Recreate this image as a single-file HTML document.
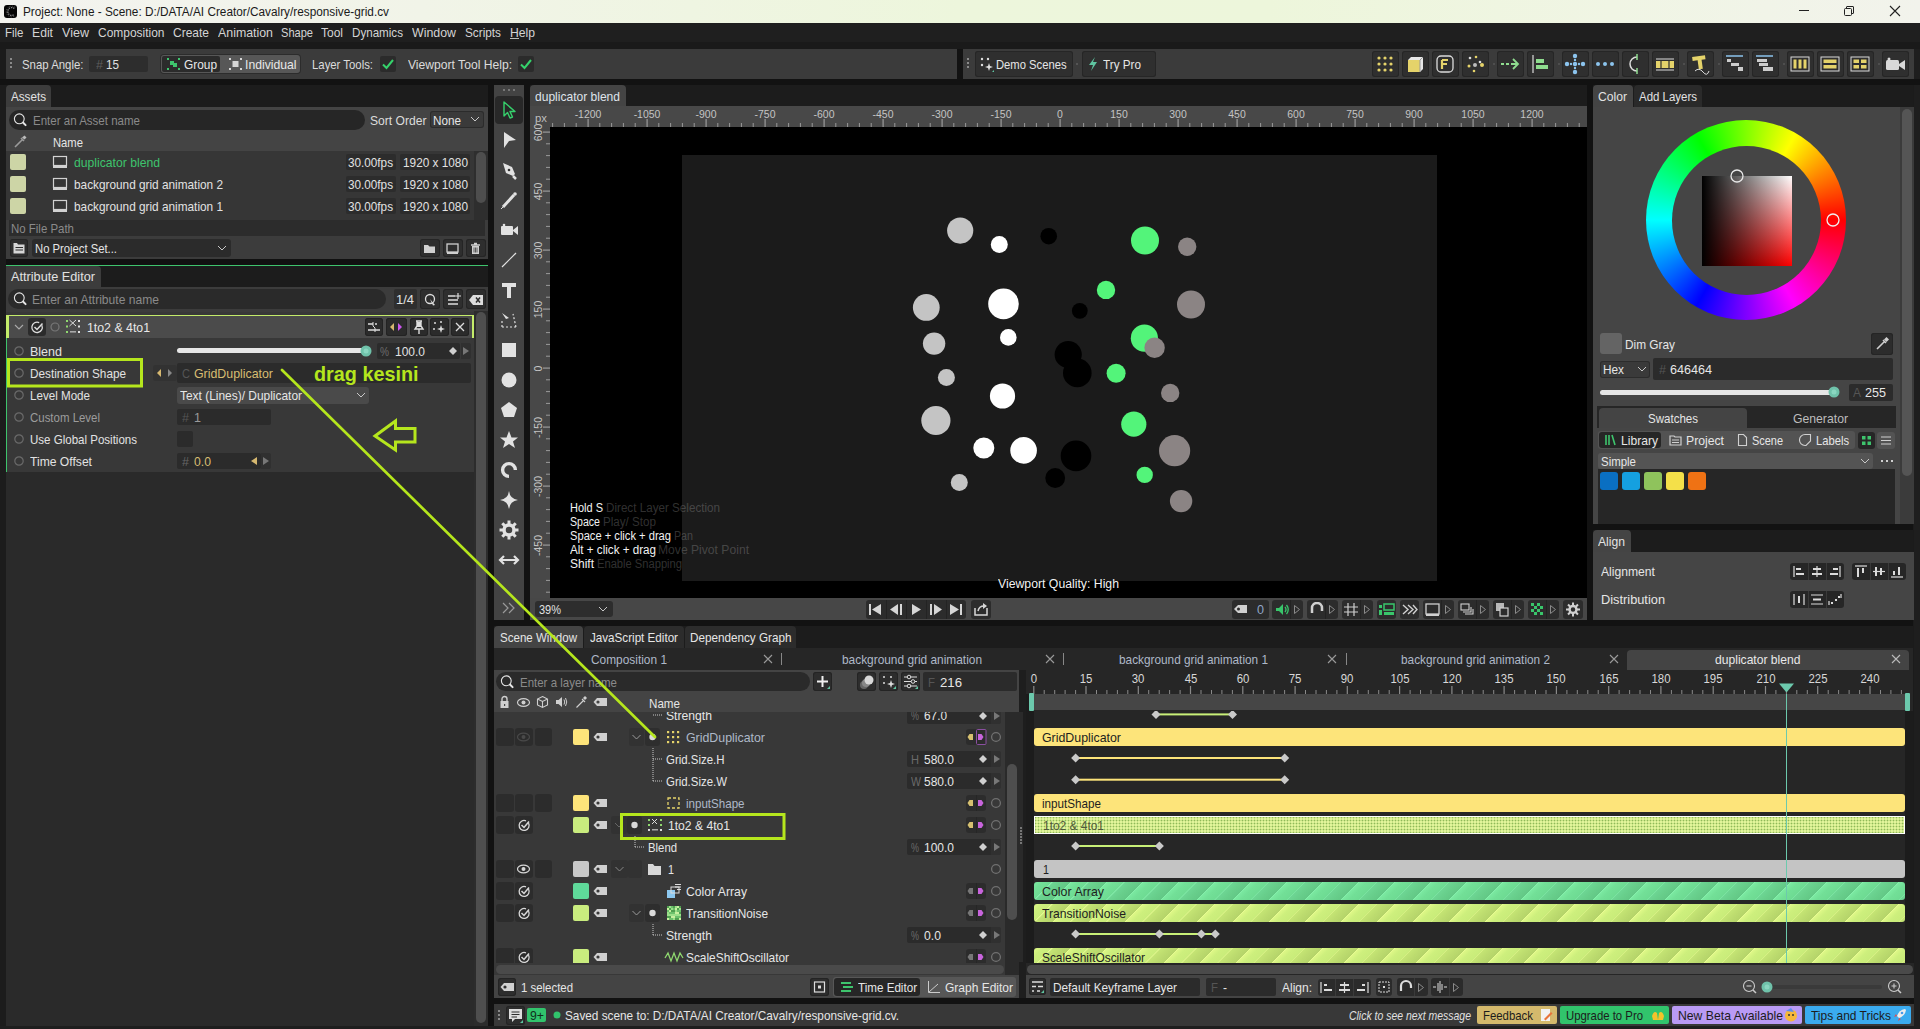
<!DOCTYPE html>
<html><head><meta charset="utf-8"><title>Cavalry</title>
<style>
html,body{margin:0;padding:0;}
body{width:1920px;height:1029px;overflow:hidden;position:relative;background:#1b1b1b;font-family:"Liberation Sans",sans-serif;}
body>div,body>svg{position:absolute;box-sizing:content-box;}
</style></head><body>
<div style="left:0px;top:0px;width:1920px;height:23px;background:linear-gradient(90deg,#f3f3ef 0%,#f1f4e8 22%,#edf6dc 50%,#edf6db 66%,#f0f5e4 84%,#f2f3ec 100%);"></div>
<div style="left:3.5px;top:4.5px;width:13px;height:13px;background:#050505;border-radius:3px;"></div>
<svg style="left:3.5px;top:4.5px;" width="13" height="13" viewBox="0 0 13 13"><path d="M10.3 3.6 A3.9 3.9 0 1 0 10.3 9.4" fill="none" stroke="#8a8a8a" stroke-width="1.3" stroke-dasharray="1.3 0.9"/><path d="M11.2 2.4 A5.4 5.4 0 1 0 11.2 10.6" fill="none" stroke="#555" stroke-width="0.9" stroke-dasharray="1.2 1.2"/></svg>
<div class="t" id="t0" style="left:23px;top:4.0px;height:16px;line-height:16px;font-size:12px;color:#1a1a1a;font-family:'Liberation Sans',sans-serif;white-space:nowrap;transform:scaleX(0.9829);transform-origin:0 50%;">Project: None - Scene: D:/DATA/AI Creator/Cavalry/responsive-grid.cv</div>
<div style="left:1799px;top:10px;width:10px;height:1px;background:#222;"></div>
<svg style="left:1843px;top:5px;" width="12" height="12" viewBox="0 0 12 12"><rect x="1.5" y="3.5" width="7" height="7" rx="1" fill="none" stroke="#222" stroke-width="1"/><path d="M3.5 3.5 V2 a0.5 .5 0 0 1 .5-.5 H10 a.5 .5 0 0 1 .5.5 V8 a.5 .5 0 0 1-.5.5 H8.5" fill="none" stroke="#222" stroke-width="1"/></svg>
<svg style="left:1889px;top:5px;" width="12" height="12" viewBox="0 0 12 12"><path d="M1 1 L11 11 M11 1 L1 11" stroke="#222" stroke-width="1.1"/></svg>
<div style="left:0px;top:23px;width:1920px;height:19px;background:#1f1f1f;"></div>
<div style="left:0px;top:42px;width:1920px;height:7px;background:#1a1a1a;"></div>
<div style="left:957px;top:49px;width:6px;height:30px;background:#121212;"></div>
<div class="t" id="t1" style="left:4.5px;top:24.0px;height:18px;line-height:18px;font-size:13px;color:#d4d4d4;font-family:'Liberation Sans',sans-serif;white-space:nowrap;transform:scaleX(0.8829);transform-origin:0 50%;">File</div>
<div class="t" id="t2" style="left:32px;top:24.0px;height:18px;line-height:18px;font-size:13px;color:#d4d4d4;font-family:'Liberation Sans',sans-serif;white-space:nowrap;transform:scaleX(0.9372);transform-origin:0 50%;">Edit</div>
<div class="t" id="t3" style="left:62px;top:24.0px;height:18px;line-height:18px;font-size:13px;color:#d4d4d4;font-family:'Liberation Sans',sans-serif;white-space:nowrap;transform:scaleX(0.9659);transform-origin:0 50%;">View</div>
<div class="t" id="t4" style="left:97.5px;top:24.0px;height:18px;line-height:18px;font-size:13px;color:#d4d4d4;font-family:'Liberation Sans',sans-serif;white-space:nowrap;transform:scaleX(0.9202);transform-origin:0 50%;">Composition</div>
<div class="t" id="t5" style="left:173px;top:24.0px;height:18px;line-height:18px;font-size:13px;color:#d4d4d4;font-family:'Liberation Sans',sans-serif;white-space:nowrap;transform:scaleX(0.9223);transform-origin:0 50%;">Create</div>
<div class="t" id="t6" style="left:218px;top:24.0px;height:18px;line-height:18px;font-size:13px;color:#d4d4d4;font-family:'Liberation Sans',sans-serif;white-space:nowrap;transform:scaleX(0.9514);transform-origin:0 50%;">Animation</div>
<div class="t" id="t7" style="left:281px;top:24.0px;height:18px;line-height:18px;font-size:13px;color:#d4d4d4;font-family:'Liberation Sans',sans-serif;white-space:nowrap;transform:scaleX(0.8512);transform-origin:0 50%;">Shape</div>
<div class="t" id="t8" style="left:321px;top:24.0px;height:18px;line-height:18px;font-size:13px;color:#d4d4d4;font-family:'Liberation Sans',sans-serif;white-space:nowrap;transform:scaleX(0.9221);transform-origin:0 50%;">Tool</div>
<div class="t" id="t9" style="left:352px;top:24.0px;height:18px;line-height:18px;font-size:13px;color:#d4d4d4;font-family:'Liberation Sans',sans-serif;white-space:nowrap;transform:scaleX(0.8935);transform-origin:0 50%;">Dynamics</div>
<div class="t" id="t10" style="left:412px;top:24.0px;height:18px;line-height:18px;font-size:13px;color:#d4d4d4;font-family:'Liberation Sans',sans-serif;white-space:nowrap;transform:scaleX(0.9514);transform-origin:0 50%;">Window</div>
<div class="t" id="t11" style="left:465px;top:24.0px;height:18px;line-height:18px;font-size:13px;color:#d4d4d4;font-family:'Liberation Sans',sans-serif;white-space:nowrap;transform:scaleX(0.9060);transform-origin:0 50%;">Scripts</div>
<div class="t" id="t12" style="left:510px;top:24.0px;height:18px;line-height:18px;font-size:13px;color:#d4d4d4;font-family:'Liberation Sans',sans-serif;white-space:nowrap;transform:scaleX(0.9346);transform-origin:0 50%;">Help</div>
<div style="left:510px;top:38px;width:9px;height:1px;background:#bbb;"></div>
<div style="left:6px;top:49px;width:951px;height:30px;background:#3b3b3b;"></div>
<div style="left:963px;top:49px;width:951px;height:30px;background:#3b3b3b;"></div>
<div style="left:1914px;top:49px;width:6px;height:30px;background:#1e1e1e;"></div>
<div style="left:10px;top:58px;width:2px;height:2px;background:#8a8a8a;"></div>
<div style="left:10px;top:62px;width:2px;height:2px;background:#8a8a8a;"></div>
<div style="left:10px;top:66px;width:2px;height:2px;background:#8a8a8a;"></div>
<div class="t" id="t13" style="left:22px;top:56.0px;height:18px;line-height:18px;font-size:13px;color:#dcdcdc;font-family:'Liberation Sans',sans-serif;white-space:nowrap;transform:scaleX(0.8770);transform-origin:0 50%;">Snap Angle:</div>
<div style="left:89px;top:56px;width:59px;height:16px;background:#2d2d2d;border-radius:2px;"></div>
<div class="t" id="t14" style="left:95.5px;top:57.0px;height:16px;line-height:16px;font-size:12px;color:#5e5e5e;font-family:'Liberation Sans',sans-serif;white-space:nowrap;transform:scaleX(1.0467);transform-origin:0 50%;">#</div>
<div class="t" id="t15" style="left:106px;top:56.0px;height:18px;line-height:18px;font-size:13px;color:#e0e0e0;font-family:'Liberation Sans',sans-serif;white-space:nowrap;transform:scaleX(0.8985);transform-origin:0 50%;">15</div>
<div style="left:161px;top:55px;width:139px;height:18px;background:#575757;border-radius:3px;box-shadow:0 0 0 1px #2c2c2c;"></div>
<div style="left:162px;top:56px;width:58px;height:16px;background:#2b2b2b;border-radius:2px;"></div>
<svg style="left:166px;top:57px;" width="15" height="14" viewBox="0 0 15 14"><g fill="#3ec46d"><rect x="1" y="1" width="2" height="2"/><rect x="12" y="1" width="2" height="2"/><rect x="1" y="11" width="2" height="2"/><rect x="12" y="11" width="2" height="2"/><rect x="4" y="4" width="4" height="4"/><rect x="7" y="6" width="4" height="4"/></g></svg>
<div class="t" id="t16" style="left:184px;top:56.0px;height:18px;line-height:18px;font-size:13px;color:#e8e8e8;font-family:'Liberation Sans',sans-serif;white-space:nowrap;transform:scaleX(0.9131);transform-origin:0 50%;">Group</div>
<svg style="left:228px;top:57px;" width="15" height="14" viewBox="0 0 15 14"><g fill="#d6d6d6"><rect x="1" y="1" width="2" height="2"/><rect x="12" y="1" width="2" height="2"/><rect x="1" y="11" width="2" height="2"/><rect x="12" y="11" width="2" height="2"/><rect x="4.5" y="4" width="6" height="6"/></g></svg>
<div class="t" id="t17" style="left:245px;top:56.0px;height:18px;line-height:18px;font-size:13px;color:#e8e8e8;font-family:'Liberation Sans',sans-serif;white-space:nowrap;transform:scaleX(0.9374);transform-origin:0 50%;">Individual</div>
<div class="t" id="t18" style="left:312px;top:56.0px;height:18px;line-height:18px;font-size:13px;color:#dcdcdc;font-family:'Liberation Sans',sans-serif;white-space:nowrap;transform:scaleX(0.8732);transform-origin:0 50%;">Layer Tools:</div>
<div style="left:380px;top:56px;width:16px;height:16px;background:#2b2b2b;border-radius:2px;"></div>
<svg style="left:380px;top:56px;" width="16" height="16" viewBox="0 0 16 16"><path d="M3 8.5 L6.5 12 L13 4" fill="none" stroke="#35d26b" stroke-width="2"/></svg>
<div class="t" id="t19" style="left:408px;top:56.0px;height:18px;line-height:18px;font-size:13px;color:#dcdcdc;font-family:'Liberation Sans',sans-serif;white-space:nowrap;transform:scaleX(0.9325);transform-origin:0 50%;">Viewport Tool Help:</div>
<div style="left:518px;top:56px;width:16px;height:16px;background:#2b2b2b;border-radius:2px;"></div>
<svg style="left:518px;top:56px;" width="16" height="16" viewBox="0 0 16 16"><path d="M3 8.5 L6.5 12 L13 4" fill="none" stroke="#35d26b" stroke-width="2"/></svg>
<div style="left:967px;top:58px;width:2px;height:2px;background:#8a8a8a;"></div>
<div style="left:967px;top:62px;width:2px;height:2px;background:#8a8a8a;"></div>
<div style="left:967px;top:66px;width:2px;height:2px;background:#8a8a8a;"></div>
<div style="left:975px;top:51px;width:98px;height:26px;background:#2f2f2f;border-radius:3px;box-shadow:inset 0 0 0 1px #262626;"></div>
<svg style="left:979px;top:56px;" width="16" height="16" viewBox="0 0 16 16"><g fill="#e0e0e0"><circle cx="3" cy="3" r="1.2"/><circle cx="9" cy="3" r="1.2"/><circle cx="3" cy="9" r="1.2"/><path d="M10 7 L11 10 L14 11 L11 12 L10 15 L9 12 L6 11 L9 10 Z"/></g><path d="M15 14 L15 16 L13 16 Z" fill="#5ec4a0"/></svg>
<div class="t" id="t20" style="left:996px;top:56.0px;height:18px;line-height:18px;font-size:13px;color:#e6e6e6;font-family:'Liberation Sans',sans-serif;white-space:nowrap;transform:scaleX(0.8634);transform-origin:0 50%;">Demo Scenes</div>
<div style="left:1076px;top:63px;width:2px;height:2px;background:#555;"></div>
<div style="left:1082px;top:51px;width:74px;height:26px;background:#2f2f2f;border-radius:3px;box-shadow:inset 0 0 0 1px #262626;"></div>
<svg style="left:1087px;top:56px;" width="12" height="16" viewBox="0 0 12 16"><path d="M8 1 L2 9 L6 9 L4 15 L10 6 L6 6 Z" fill="#5ec4a0"/></svg>
<div class="t" id="t21" style="left:1103px;top:56.0px;height:18px;line-height:18px;font-size:13px;color:#e6e6e6;font-family:'Liberation Sans',sans-serif;white-space:nowrap;transform:scaleX(0.9017);transform-origin:0 50%;">Try Pro</div>
<div style="left:1372px;top:51px;width:27px;height:26px;background:#2f2f2f;border-radius:3px;box-shadow:inset 0 0 0 1px #262626;"></div>
<svg style="left:1372px;top:51px;" width="26" height="26" viewBox="0 0 26 26"><circle cx="7" cy="7" r="1.6" fill="#e5d36a"/><circle cx="7" cy="13" r="1.6" fill="#e5d36a"/><circle cx="7" cy="19" r="1.6" fill="#e5d36a"/><circle cx="13" cy="7" r="1.6" fill="#e5d36a"/><circle cx="13" cy="13" r="1.6" fill="#e5d36a"/><circle cx="13" cy="19" r="1.6" fill="#e5d36a"/><circle cx="19" cy="7" r="1.6" fill="#e5d36a"/><circle cx="19" cy="13" r="1.6" fill="#e5d36a"/><circle cx="19" cy="19" r="1.6" fill="#e5d36a"/></svg>
<div style="left:1402px;top:51px;width:27px;height:26px;background:#2f2f2f;border-radius:3px;box-shadow:inset 0 0 0 1px #262626;"></div>
<svg style="left:1402px;top:51px;" width="26" height="26" viewBox="0 0 26 26"><path d="M6 9 L9 6 L21 6 L21 18 L18 21 Z" fill="#e8e8e8"/><rect x="6" y="9" width="12" height="12" fill="#e5d36a"/><path d="M18 9 L21 6 M18 9 V21" stroke="#999" stroke-width="1"/></svg>
<div style="left:1432px;top:51px;width:27px;height:26px;background:#2f2f2f;border-radius:3px;box-shadow:inset 0 0 0 1px #262626;"></div>
<svg style="left:1432px;top:51px;" width="26" height="26" viewBox="0 0 26 26"><rect x="5" y="5" width="16" height="16" rx="4" fill="none" stroke="#dcdcdc" stroke-width="1.3"/><path d="M10 9 H16 M10 9 V18 M10 13 H15" stroke="#e5d36a" stroke-width="2.2"/></svg>
<div style="left:1462px;top:51px;width:27px;height:26px;background:#2f2f2f;border-radius:3px;box-shadow:inset 0 0 0 1px #262626;"></div>
<svg style="left:1462px;top:51px;" width="26" height="26" viewBox="0 0 26 26"><circle cx="8" cy="7" r="1.3" fill="#dcdcdc"/><circle cx="14" cy="6" r="1.3" fill="#e5d36a"/><circle cx="18" cy="11" r="1.3" fill="#dcdcdc"/><circle cx="7" cy="15" r="1.5" fill="#e5d36a"/><circle cx="13" cy="14" r="2" fill="#bbb"/><circle cx="20" cy="14" r="2" fill="#e5d36a"/><circle cx="12" cy="20" r="1.3" fill="#e5d36a"/></svg>
<div style="left:1497px;top:51px;width:27px;height:26px;background:#2f2f2f;border-radius:3px;box-shadow:inset 0 0 0 1px #262626;"></div>
<svg style="left:1497px;top:51px;" width="26" height="26" viewBox="0 0 26 26"><path d="M4 13 H7 M9 13 H12 M14 13 H21 M16 8 L21 13 L16 18" fill="none" stroke="#8fdc8f" stroke-width="1.8"/></svg>
<div style="left:1527px;top:51px;width:27px;height:26px;background:#2f2f2f;border-radius:3px;box-shadow:inset 0 0 0 1px #262626;"></div>
<svg style="left:1527px;top:51px;" width="26" height="26" viewBox="0 0 26 26"><path d="M6 4 V22" stroke="#dcdcdc" stroke-width="1.2"/><rect x="9" y="8" width="8" height="4" fill="#8fdc8f"/><rect x="9" y="14" width="12" height="4" fill="#8fdc8f"/></svg>
<div style="left:1562px;top:51px;width:27px;height:26px;background:#2f2f2f;border-radius:3px;box-shadow:inset 0 0 0 1px #262626;"></div>
<svg style="left:1562px;top:51px;" width="26" height="26" viewBox="0 0 26 26"><circle cx="13" cy="5" r="2.2" fill="#8cc4ee"/><circle cx="13" cy="13" r="2.2" fill="#8cc4ee"/><circle cx="13" cy="21" r="2.2" fill="#8cc4ee"/><circle cx="5" cy="13" r="2.2" fill="#8cc4ee"/><circle cx="21" cy="13" r="2.2" fill="#8cc4ee"/><circle cx="9" cy="13" r="1.2" fill="#8cc4ee"/><circle cx="17" cy="13" r="1.2" fill="#8cc4ee"/><circle cx="13" cy="9" r="1.2" fill="#8cc4ee"/><circle cx="13" cy="17" r="1.2" fill="#8cc4ee"/></svg>
<div style="left:1592px;top:51px;width:27px;height:26px;background:#2f2f2f;border-radius:3px;box-shadow:inset 0 0 0 1px #262626;"></div>
<svg style="left:1592px;top:51px;" width="26" height="26" viewBox="0 0 26 26"><circle cx="6" cy="13" r="2" fill="#8cc4ee"/><circle cx="13" cy="13" r="2" fill="#8cc4ee"/><circle cx="20" cy="13" r="2" fill="#8cc4ee"/></svg>
<div style="left:1622px;top:51px;width:27px;height:26px;background:#2f2f2f;border-radius:3px;box-shadow:inset 0 0 0 1px #262626;"></div>
<svg style="left:1622px;top:51px;" width="26" height="26" viewBox="0 0 26 26"><path d="M15 6 A7 7 0 1 0 15 20" fill="none" stroke="#dcdcdc" stroke-width="1.5"/><path d="M15 3 V9 M15 17 V23" stroke="#8fdc8f" stroke-width="1.5"/></svg>
<div style="left:1652px;top:51px;width:27px;height:26px;background:#2f2f2f;border-radius:3px;box-shadow:inset 0 0 0 1px #262626;"></div>
<svg style="left:1652px;top:51px;" width="26" height="26" viewBox="0 0 26 26"><rect x="4" y="10" width="18" height="7" fill="#e5d36a"/><path d="M4 8 H22 M4 19 H22" stroke="#dcdcdc" stroke-width="1"/><path d="M9 10 V17 M17 10 V17" stroke="#2f2f2f" stroke-width="1.2"/></svg>
<div style="left:1687px;top:51px;width:27px;height:26px;background:#2f2f2f;border-radius:3px;box-shadow:inset 0 0 0 1px #262626;"></div>
<svg style="left:1687px;top:51px;" width="26" height="26" viewBox="0 0 26 26"><path d="M6 5 H19 V9 H15 V18 H11 V9 H6 Z" fill="#e5d36a" transform="rotate(-8 13 12)"/><path d="M8 20 Q12 16 16 21 T22 20" fill="none" stroke="#dcdcdc" stroke-width="1"/></svg>
<div style="left:1722px;top:51px;width:27px;height:26px;background:#2f2f2f;border-radius:3px;box-shadow:inset 0 0 0 1px #262626;"></div>
<svg style="left:1722px;top:51px;" width="26" height="26" viewBox="0 0 26 26"><path d="M4 5 H21" stroke="#8cc4ee" stroke-width="1.5"/><rect x="5" y="8" width="4" height="3" fill="#ccc"/><rect x="9" y="12" width="8" height="3" fill="#ccc"/><rect x="16" y="16" width="5" height="4" fill="#ccc"/></svg>
<div style="left:1752px;top:51px;width:27px;height:26px;background:#2f2f2f;border-radius:3px;box-shadow:inset 0 0 0 1px #262626;"></div>
<svg style="left:1752px;top:51px;" width="26" height="26" viewBox="0 0 26 26"><path d="M4 5 H21" stroke="#8cc4ee" stroke-width="1.5"/><rect x="5" y="8" width="10" height="3" fill="#ccc"/><rect x="7" y="12" width="9" height="3" fill="#ccc"/><rect x="11" y="16" width="10" height="4" fill="#ccc"/></svg>
<div style="left:1787px;top:51px;width:27px;height:26px;background:#2f2f2f;border-radius:3px;box-shadow:inset 0 0 0 1px #262626;"></div>
<svg style="left:1787px;top:51px;" width="26" height="26" viewBox="0 0 26 26"><rect x="4" y="6" width="18" height="14" fill="none" stroke="#dcdcdc" stroke-width="1"/><rect x="6.5" y="8.5" width="3" height="9" fill="#e5d36a"/><rect x="11.5" y="8.5" width="3" height="9" fill="#e5d36a"/><rect x="16.5" y="8.5" width="3" height="9" fill="#e5d36a"/></svg>
<div style="left:1817px;top:51px;width:27px;height:26px;background:#2f2f2f;border-radius:3px;box-shadow:inset 0 0 0 1px #262626;"></div>
<svg style="left:1817px;top:51px;" width="26" height="26" viewBox="0 0 26 26"><rect x="4" y="6" width="18" height="14" fill="none" stroke="#dcdcdc" stroke-width="1"/><rect x="6.5" y="8.5" width="13" height="3.5" fill="#e5d36a"/><rect x="6.5" y="14" width="13" height="3.5" fill="#e5d36a"/></svg>
<div style="left:1847px;top:51px;width:27px;height:26px;background:#2f2f2f;border-radius:3px;box-shadow:inset 0 0 0 1px #262626;"></div>
<svg style="left:1847px;top:51px;" width="26" height="26" viewBox="0 0 26 26"><rect x="4" y="6" width="18" height="14" fill="none" stroke="#dcdcdc" stroke-width="1"/><rect x="6.5" y="8.5" width="5.5" height="3.5" fill="#e5d36a"/><rect x="14" y="8.5" width="5.5" height="3.5" fill="#e5d36a"/><rect x="6.5" y="14" width="5.5" height="3.5" fill="#e5d36a"/><rect x="14" y="14" width="5.5" height="3.5" fill="#e5d36a"/></svg>
<div style="left:1882px;top:51px;width:27px;height:26px;background:#2f2f2f;border-radius:3px;box-shadow:inset 0 0 0 1px #262626;"></div>
<svg style="left:1882px;top:51px;" width="26" height="26" viewBox="0 0 26 26"><rect x="4" y="9" width="13" height="10" rx="1.5" fill="#d8d8d8"/><path d="M17 13 L23 9 V19 L17 15 Z" fill="#d8d8d8"/><circle cx="7" cy="8" r="1.5" fill="#d8d8d8"/></svg>
<div style="left:1493px;top:63px;width:2px;height:2px;background:#4e4e4e;"></div>
<div style="left:1558px;top:63px;width:2px;height:2px;background:#4e4e4e;"></div>
<div style="left:1683px;top:63px;width:2px;height:2px;background:#4e4e4e;"></div>
<div style="left:1718px;top:63px;width:2px;height:2px;background:#4e4e4e;"></div>
<div style="left:1783px;top:63px;width:2px;height:2px;background:#4e4e4e;"></div>
<div style="left:1878px;top:63px;width:2px;height:2px;background:#4e4e4e;"></div>
<div style="left:0px;top:79px;width:1920px;height:6px;background:#121212;"></div>
<div style="left:0px;top:85px;width:6px;height:944px;background:#1c1c1c;"></div>
<div style="left:6px;top:85px;width:482px;height:22px;background:#1c1c1c;"></div>
<div style="left:6px;top:85px;width:45px;height:22px;background:#3c3c3c;border-radius:4px 4px 0 0;"></div>
<div class="t" id="t22" style="left:11px;top:88.0px;height:18px;line-height:18px;font-size:13px;color:#e2e2e2;font-family:'Liberation Sans',sans-serif;white-space:nowrap;transform:scaleX(0.8971);transform-origin:0 50%;">Assets</div>
<div style="left:6px;top:107px;width:482px;height:44px;background:#444444;"></div>
<div style="left:6px;top:151px;width:482px;height:69px;background:#363636;"></div>
<div style="left:9px;top:110px;width:356px;height:20px;background:#262626;border-radius:10px;"></div>
<svg style="left:13px;top:112px;" width="16" height="16" viewBox="0 0 16 16"><circle cx="6.3" cy="6.8" r="4.9" fill="none" stroke="#e6e6e6" stroke-width="1.1"/><path d="M10.2 10.7 L12.6 13.1" stroke="#e6e6e6" stroke-width="2" stroke-linecap="round"/></svg>
<div class="t" id="t23" style="left:33px;top:111.5px;height:18px;line-height:18px;font-size:13px;color:#8a8a8a;font-family:'Liberation Sans',sans-serif;white-space:nowrap;transform:scaleX(0.8866);transform-origin:0 50%;">Enter an Asset name</div>
<div class="t" id="t24" style="left:370px;top:111.5px;height:18px;line-height:18px;font-size:13px;color:#dcdcdc;font-family:'Liberation Sans',sans-serif;white-space:nowrap;transform:scaleX(0.9310);transform-origin:0 50%;">Sort Order</div>
<div style="left:430px;top:111px;width:54px;height:17px;background:#3a3a3a;border-radius:3px;box-shadow:inset 0 0 0 1px #2b2b2b;"></div>
<div class="t" id="t25" style="left:433px;top:111.5px;height:18px;line-height:18px;font-size:13px;color:#e6e6e6;font-family:'Liberation Sans',sans-serif;white-space:nowrap;transform:scaleX(0.9010);transform-origin:0 50%;">None</div>
<svg style="left:470px;top:114px;" width="10" height="10" viewBox="0 0 10 10"><path d="M1 3 L5 7 L9 3" fill="none" stroke="#c8c8c8" stroke-width="1"/></svg>
<svg style="left:13px;top:135px;" width="14" height="14" viewBox="0 0 14 14"><path d="M2 12 L9 5 M8 3 L11 6" stroke="#9a9a9a" stroke-width="1.6"/><path d="M9 2.5 L11.5 0.5 L13.5 2.5 L11.5 4.5 Z" fill="#bbb"/></svg>
<div class="t" id="t26" style="left:53px;top:134.0px;height:18px;line-height:18px;font-size:13px;color:#e6e6e6;font-family:'Liberation Sans',sans-serif;white-space:nowrap;transform:scaleX(0.8649);transform-origin:0 50%;">Name</div>
<div style="left:10px;top:154px;width:16px;height:16px;background:#cdd5a6;border-radius:2px;"></div>
<svg style="left:52px;top:155px;" width="16" height="14" viewBox="0 0 16 14"><rect x="1.5" y="1.5" width="13" height="9" fill="none" stroke="#d2d2d2" stroke-width="1.2"/><rect x="1" y="10" width="14" height="3" fill="#d2d2d2"/></svg>
<div class="t" id="t27" style="left:74px;top:153.5px;height:18px;line-height:18px;font-size:13px;color:#3ec46d;font-family:'Liberation Sans',sans-serif;white-space:nowrap;transform:scaleX(0.9369);transform-origin:0 50%;">duplicator blend</div>
<div style="left:346px;top:154px;width:50px;height:16px;background:#2c2c2c;border-radius:2px;"></div>
<div class="t" id="t28" style="left:348px;top:153.5px;height:18px;line-height:18px;font-size:13px;color:#e2e2e2;font-family:'Liberation Sans',sans-serif;white-space:nowrap;transform:scaleX(0.9023);transform-origin:0 50%;">30.00fps</div>
<div style="left:400px;top:154px;width:70px;height:16px;background:#2c2c2c;border-radius:2px;"></div>
<div class="t" id="t29" style="left:403px;top:153.5px;height:18px;line-height:18px;font-size:13px;color:#e2e2e2;font-family:'Liberation Sans',sans-serif;white-space:nowrap;transform:scaleX(0.9081);transform-origin:0 50%;">1920 x 1080</div>
<div style="left:10px;top:176px;width:16px;height:16px;background:#cdd5a6;border-radius:2px;"></div>
<svg style="left:52px;top:177px;" width="16" height="14" viewBox="0 0 16 14"><rect x="1.5" y="1.5" width="13" height="9" fill="none" stroke="#d2d2d2" stroke-width="1.2"/><rect x="1" y="10" width="14" height="3" fill="#d2d2d2"/></svg>
<div class="t" id="t30" style="left:74px;top:175.5px;height:18px;line-height:18px;font-size:13px;color:#e2e2e2;font-family:'Liberation Sans',sans-serif;white-space:nowrap;transform:scaleX(0.9082);transform-origin:0 50%;">background grid animation 2</div>
<div style="left:346px;top:176px;width:50px;height:16px;background:#2c2c2c;border-radius:2px;"></div>
<div class="t" id="t31" style="left:348px;top:175.5px;height:18px;line-height:18px;font-size:13px;color:#e2e2e2;font-family:'Liberation Sans',sans-serif;white-space:nowrap;transform:scaleX(0.9023);transform-origin:0 50%;">30.00fps</div>
<div style="left:400px;top:176px;width:70px;height:16px;background:#2c2c2c;border-radius:2px;"></div>
<div class="t" id="t32" style="left:403px;top:175.5px;height:18px;line-height:18px;font-size:13px;color:#e2e2e2;font-family:'Liberation Sans',sans-serif;white-space:nowrap;transform:scaleX(0.9081);transform-origin:0 50%;">1920 x 1080</div>
<div style="left:10px;top:198px;width:16px;height:16px;background:#cdd5a6;border-radius:2px;"></div>
<svg style="left:52px;top:199px;" width="16" height="14" viewBox="0 0 16 14"><rect x="1.5" y="1.5" width="13" height="9" fill="none" stroke="#d2d2d2" stroke-width="1.2"/><rect x="1" y="10" width="14" height="3" fill="#d2d2d2"/></svg>
<div class="t" id="t33" style="left:74px;top:197.5px;height:18px;line-height:18px;font-size:13px;color:#e2e2e2;font-family:'Liberation Sans',sans-serif;white-space:nowrap;transform:scaleX(0.9082);transform-origin:0 50%;">background grid animation 1</div>
<div style="left:346px;top:198px;width:50px;height:16px;background:#2c2c2c;border-radius:2px;"></div>
<div class="t" id="t34" style="left:348px;top:197.5px;height:18px;line-height:18px;font-size:13px;color:#e2e2e2;font-family:'Liberation Sans',sans-serif;white-space:nowrap;transform:scaleX(0.9023);transform-origin:0 50%;">30.00fps</div>
<div style="left:400px;top:198px;width:70px;height:16px;background:#2c2c2c;border-radius:2px;"></div>
<div class="t" id="t35" style="left:403px;top:197.5px;height:18px;line-height:18px;font-size:13px;color:#e2e2e2;font-family:'Liberation Sans',sans-serif;white-space:nowrap;transform:scaleX(0.9081);transform-origin:0 50%;">1920 x 1080</div>
<div style="left:474px;top:151px;width:14px;height:69px;background:#2e2e2e;"></div>
<div style="left:476px;top:152px;width:10px;height:51px;background:#4e4e4e;border-radius:5px;"></div>
<div style="left:6px;top:220px;width:482px;height:17px;background:#3c3c3c;"></div>
<div style="left:9px;top:220px;width:476px;height:16px;background:#2c2c2c;"></div>
<div class="t" id="t36" style="left:11px;top:220.0px;height:18px;line-height:18px;font-size:13px;color:#8a8a8a;font-family:'Liberation Sans',sans-serif;white-space:nowrap;transform:scaleX(0.8805);transform-origin:0 50%;">No File Path</div>
<div style="left:6px;top:237px;width:482px;height:22px;background:#3c3c3c;"></div>
<div style="left:10px;top:239px;width:18px;height:18px;background:#2e2e2e;border-radius:3px;box-shadow:inset 0 0 0 1px #252525;"></div>
<svg style="left:12px;top:241px;" width="14" height="14" viewBox="0 0 14 14"><path d="M1.5 2 H5 L6 3.5 H12.5 V12.5 H1.5 Z" fill="#d6d6d6"/><path d="M3.5 6.5 H11 M3.5 9 H11" stroke="#2e2e2e" stroke-width="1.2"/></svg>
<div style="left:32px;top:239px;width:199px;height:18px;background:#2b2b2b;border-radius:3px;"></div>
<div class="t" id="t37" style="left:35px;top:239.5px;height:18px;line-height:18px;font-size:13px;color:#e6e6e6;font-family:'Liberation Sans',sans-serif;white-space:nowrap;transform:scaleX(0.8663);transform-origin:0 50%;">No Project Set...</div>
<svg style="left:217px;top:243px;" width="10" height="10" viewBox="0 0 10 10"><path d="M1 3 L5 7 L9 3" fill="none" stroke="#c8c8c8" stroke-width="1"/></svg>
<div style="left:420px;top:239px;width:20px;height:18px;background:#2e2e2e;border-radius:3px;box-shadow:inset 0 0 0 1px #252525;"></div>
<svg style="left:422px;top:241px;" width="15" height="15" viewBox="0 0 15 15"><path d="M2 4 H6 L7.5 5.5 H13 V12 H2 Z" fill="#d0d0d0"/></svg>
<div style="left:443px;top:239px;width:20px;height:18px;background:#2e2e2e;border-radius:3px;box-shadow:inset 0 0 0 1px #252525;"></div>
<svg style="left:445px;top:241px;" width="15" height="15" viewBox="0 0 15 15"><rect x="2" y="3" width="11" height="8" fill="none" stroke="#d0d0d0" stroke-width="1.3"/><rect x="2" y="11" width="11" height="2" fill="#d0d0d0"/></svg>
<div style="left:466px;top:239px;width:20px;height:18px;background:#2e2e2e;border-radius:3px;box-shadow:inset 0 0 0 1px #252525;"></div>
<svg style="left:468px;top:241px;" width="15" height="15" viewBox="0 0 15 15"><path d="M3 4 H12 M6 2.5 H9" stroke="#d0d0d0" stroke-width="1.3"/><path d="M4 5 V13 H11 V5" fill="#d0d0d0"/><path d="M6 6.5 V11.5 M7.5 6.5 V11.5 M9 6.5 V11.5" stroke="#3c3c3c" stroke-width="0.8"/></svg>
<div style="left:6px;top:259px;width:482px;height:6px;background:#111111;"></div>
<div style="left:6px;top:265px;width:482px;height:1px;background:#3ec46d;"></div>
<div style="left:6px;top:266px;width:482px;height:21px;background:#1c1c1c;"></div>
<div style="left:6px;top:266px;width:95px;height:21px;background:#3c3c3c;border-radius:0 4px 0 0;"></div>
<div class="t" id="t38" style="left:11px;top:268.0px;height:18px;line-height:18px;font-size:13px;color:#e2e2e2;font-family:'Liberation Sans',sans-serif;white-space:nowrap;transform:scaleX(0.9767);transform-origin:0 50%;">Attribute Editor</div>
<div style="left:6px;top:287px;width:482px;height:25px;background:#3c3c3c;"></div>
<div style="left:8px;top:289px;width:378px;height:20px;background:#2a2a2a;border-radius:10px;"></div>
<svg style="left:13px;top:291px;" width="16" height="16" viewBox="0 0 16 16"><circle cx="6.3" cy="6.8" r="4.9" fill="none" stroke="#e6e6e6" stroke-width="1.1"/><path d="M10.2 10.7 L12.6 13.1" stroke="#e6e6e6" stroke-width="2" stroke-linecap="round"/></svg>
<div class="t" id="t39" style="left:32px;top:290.5px;height:18px;line-height:18px;font-size:13px;color:#8a8a8a;font-family:'Liberation Sans',sans-serif;white-space:nowrap;transform:scaleX(0.9298);transform-origin:0 50%;">Enter an Attribute name</div>
<div style="left:394px;top:289px;width:23px;height:20px;background:#2e2e2e;border-radius:2px;"></div>
<div class="t" id="t40" style="left:396px;top:290.5px;height:18px;line-height:18px;font-size:13px;color:#e2e2e2;font-family:'Liberation Sans',sans-serif;white-space:nowrap;transform:scaleX(0.9957);transform-origin:0 50%;">1/4</div>
<div style="left:420px;top:289px;width:20px;height:20px;background:#2e2e2e;border-radius:3px;box-shadow:inset 0 0 0 1px #252525;"></div>
<svg style="left:423px;top:292px;" width="15" height="15" viewBox="0 0 15 15"><circle cx="7" cy="7" r="4.5" fill="none" stroke="#ddd" stroke-width="1.3"/><path d="M7 7 L12 13 L10 13.5 Z" fill="#ddd"/></svg>
<div style="left:443px;top:289px;width:20px;height:20px;background:#2e2e2e;border-radius:3px;box-shadow:inset 0 0 0 1px #252525;"></div>
<svg style="left:446px;top:292px;" width="15" height="15" viewBox="0 0 15 15"><path d="M2 4 H9 M2 8 H12 M2 12 H12" stroke="#ddd" stroke-width="1.5"/><path d="M12 1 V7 M9 4 H15" stroke="#ddd" stroke-width="1.2"/></svg>
<div style="left:466px;top:289px;width:20px;height:20px;background:#2e2e2e;border-radius:3px;box-shadow:inset 0 0 0 1px #252525;"></div>
<svg style="left:469px;top:292px;" width="15" height="15" viewBox="0 0 15 15"><path d="M4 3 H14 V13 H4 L0 8 Z" fill="#ddd"/><path d="M7 5.5 L11 10.5 M11 5.5 L7 10.5" stroke="#2e2e2e" stroke-width="1.5"/></svg>
<div style="left:6px;top:312px;width:482px;height:160px;background:#383838;"></div>
<div style="left:6px;top:315px;width:469px;height:23px;background:#4b4b4b;"></div>
<div style="left:6px;top:315px;width:469px;height:1px;background:#c4ec6a;"></div>
<div style="left:6px;top:315px;width:3px;height:23px;background:#c4ec6a;"></div>
<div style="left:472px;top:315px;width:3px;height:23px;background:#c4ec6a;"></div>
<svg style="left:13px;top:321px;" width="12" height="12" viewBox="0 0 12 12"><path d="M2 4 L6 8 L10 4" fill="none" stroke="#aaa" stroke-width="1.1"/></svg>
<div style="left:28px;top:318px;width:18px;height:18px;background:#2b2b2b;border-radius:3px;"></div>
<svg style="left:29px;top:319px;" width="16" height="16" viewBox="0 0 16 16"><path d="M12.8 6.2 A5.2 5.2 0 1 1 10.2 3.6" fill="none" stroke="#ddd" stroke-width="1.3"/><path d="M5.5 8 L8 10.5 L13.5 4.5" fill="none" stroke="#ddd" stroke-width="1.5"/></svg>
<svg style="left:49px;top:321px;" width="12" height="12" viewBox="0 0 12 12"><circle cx="6" cy="6" r="4" fill="none" stroke="#777" stroke-width="1.2"/></svg>
<svg style="left:65px;top:319px;" width="16" height="16" viewBox="0 0 16 16"><g fill="#8fd86f"><rect x="1" y="1" width="2" height="2"/><rect x="1" y="6.5" width="2" height="2"/><rect x="1" y="12" width="2" height="2"/></g><g fill="#e0e0e0"><rect x="13" y="1" width="2" height="2"/><rect x="13" y="6.5" width="2" height="2"/><rect x="13" y="12" width="2" height="2"/></g><path d="M4.5 1 L11 7 M11 1 L4.5 7" stroke="#ddd" stroke-width="1"/><rect x="5" y="12" width="6" height="1.6" fill="#aaa"/></svg>
<div class="t" id="t41" style="left:87px;top:318.5px;height:18px;line-height:18px;font-size:13px;color:#e8e8e8;font-family:'Liberation Sans',sans-serif;white-space:nowrap;transform:scaleX(0.9474);transform-origin:0 50%;">1to2 &amp; 4to1</div>
<div style="left:365px;top:318px;width:18px;height:18px;background:#2b2b2b;border-radius:3px;box-shadow:inset 0 0 0 1px #232323;"></div>
<svg style="left:366px;top:320px;" width="16" height="14" viewBox="0 0 16 14"><path d="M2 4 H7 M2 10 H14 M9 4 L11 4" stroke="#ddd" stroke-width="1.6"/><path d="M7 2 V6 L9 8 V12" fill="none" stroke="#ddd" stroke-width="1"/></svg>
<div style="left:386px;top:318px;width:21px;height:18px;background:#2b2b2b;border-radius:3px;box-shadow:inset 0 0 0 1px #232323;"></div>
<svg style="left:387px;top:320px;" width="19" height="14" viewBox="0 0 19 14"><path d="M7 3 L3 7 L7 11 Z" fill="#d6b870"/><path d="M11 3 L15 7 L11 11 Z" fill="#cc55ee"/></svg>
<div style="left:410px;top:318px;width:18px;height:18px;background:#2b2b2b;border-radius:3px;box-shadow:inset 0 0 0 1px #232323;"></div>
<svg style="left:411px;top:319px;" width="16" height="16" viewBox="0 0 16 16"><path d="M5 2 H11 M6 2 V7 L4 10 H12 L10 7 V2 M8 10 V15" fill="none" stroke="#ddd" stroke-width="1.4"/><path d="M6 3 H10 V8 H6 Z" fill="#ddd"/></svg>
<div style="left:430px;top:318px;width:19px;height:18px;background:#2b2b2b;border-radius:3px;box-shadow:inset 0 0 0 1px #232323;"></div>
<svg style="left:431px;top:319px;" width="16" height="16" viewBox="0 0 16 16"><g fill="#ddd"><circle cx="4" cy="4" r="1"/><circle cx="10" cy="3" r="1"/><circle cx="3" cy="10" r="1"/><path d="M10 6 L11 9 L14 10 L11 11 L10 14 L9 11 L6 10 L9 9 Z"/></g></svg>
<div style="left:451px;top:318px;width:18px;height:18px;background:#2b2b2b;border-radius:3px;box-shadow:inset 0 0 0 1px #232323;"></div>
<svg style="left:452px;top:319px;" width="16" height="16" viewBox="0 0 16 16"><path d="M4 4 L12 12 M12 4 L4 12" stroke="#ddd" stroke-width="1.3"/></svg>
<div style="left:6px;top:338px;width:1px;height:134px;background:#3ec46d;"></div>
<svg style="left:13px;top:345px;" width="12" height="12" viewBox="0 0 12 12"><circle cx="6" cy="6" r="4.2" fill="none" stroke="#6a6a6a" stroke-width="1.2"/></svg>
<div class="t" id="t42" style="left:30px;top:342.5px;height:18px;line-height:18px;font-size:13px;color:#e2e2e2;font-family:'Liberation Sans',sans-serif;white-space:nowrap;transform:scaleX(0.9624);transform-origin:0 50%;">Blend</div>
<svg style="left:13px;top:367px;" width="12" height="12" viewBox="0 0 12 12"><circle cx="6" cy="6" r="4.2" fill="none" stroke="#6a6a6a" stroke-width="1.2"/></svg>
<div class="t" id="t43" style="left:30px;top:364.5px;height:18px;line-height:18px;font-size:13px;color:#e2e2e2;font-family:'Liberation Sans',sans-serif;white-space:nowrap;transform:scaleX(0.9035);transform-origin:0 50%;">Destination Shape</div>
<svg style="left:13px;top:389px;" width="12" height="12" viewBox="0 0 12 12"><circle cx="6" cy="6" r="4.2" fill="none" stroke="#6a6a6a" stroke-width="1.2"/></svg>
<div class="t" id="t44" style="left:30px;top:386.5px;height:18px;line-height:18px;font-size:13px;color:#e2e2e2;font-family:'Liberation Sans',sans-serif;white-space:nowrap;transform:scaleX(0.8926);transform-origin:0 50%;">Level Mode</div>
<svg style="left:13px;top:411px;" width="12" height="12" viewBox="0 0 12 12"><circle cx="6" cy="6" r="4.2" fill="none" stroke="#6a6a6a" stroke-width="1.2"/></svg>
<div class="t" id="t45" style="left:30px;top:408.5px;height:18px;line-height:18px;font-size:13px;color:#9c9c9c;font-family:'Liberation Sans',sans-serif;white-space:nowrap;transform:scaleX(0.8807);transform-origin:0 50%;">Custom Level</div>
<svg style="left:13px;top:433px;" width="12" height="12" viewBox="0 0 12 12"><circle cx="6" cy="6" r="4.2" fill="none" stroke="#6a6a6a" stroke-width="1.2"/></svg>
<div class="t" id="t46" style="left:30px;top:430.5px;height:18px;line-height:18px;font-size:13px;color:#e2e2e2;font-family:'Liberation Sans',sans-serif;white-space:nowrap;transform:scaleX(0.8867);transform-origin:0 50%;">Use Global Positions</div>
<svg style="left:13px;top:455px;" width="12" height="12" viewBox="0 0 12 12"><circle cx="6" cy="6" r="4.2" fill="none" stroke="#6a6a6a" stroke-width="1.2"/></svg>
<div class="t" id="t47" style="left:30px;top:452.5px;height:18px;line-height:18px;font-size:13px;color:#e2e2e2;font-family:'Liberation Sans',sans-serif;white-space:nowrap;transform:scaleX(0.9328);transform-origin:0 50%;">Time Offset</div>
<div style="left:177px;top:348px;width:190px;height:5px;background:#e6e6e6;border-radius:3px;"></div>
<svg style="left:359px;top:344px;" width="14" height="14" viewBox="0 0 14 14"><circle cx="7" cy="7" r="5.5" fill="#6fc2aa"/><circle cx="7" cy="7" r="2.5" fill="#8ad6c0"/></svg>
<div style="left:377px;top:343px;width:83px;height:16px;background:#2b2b2b;border-radius:2px;"></div>
<div style="left:461px;top:343px;width:10px;height:16px;background:#303030;border-radius:0 2px 2px 0;"></div>
<div class="t" id="t48" style="left:380px;top:343.5px;height:16px;line-height:16px;font-size:12px;color:#6e6e6e;font-family:'Liberation Sans',sans-serif;white-space:nowrap;transform:scaleX(0.8433);transform-origin:0 50%;">%</div>
<div class="t" id="t49" style="left:395px;top:342.5px;height:18px;line-height:18px;font-size:13px;color:#e2e2e2;font-family:'Liberation Sans',sans-serif;white-space:nowrap;transform:scaleX(0.9217);transform-origin:0 50%;">100.0</div>
<svg style="left:448px;top:346px;" width="10" height="10" viewBox="0 0 10 10"><path d="M5 1 L9 5 L5 9 L1 5 Z" fill="#d0d0d0"/></svg>
<svg style="left:462px;top:346px;" width="8" height="10" viewBox="0 0 8 10"><path d="M1 1 L7 5 L1 9 Z" fill="#777"/></svg>
<div style="left:153px;top:365px;width:24px;height:16px;background:#323232;border-radius:3px;"></div>
<svg style="left:154px;top:367px;" width="22" height="12" viewBox="0 0 22 12"><path d="M7 2 L3 6 L7 10 Z" fill="#d6b870"/><path d="M14 2 L18 6 L14 10 Z" fill="#888"/></svg>
<div style="left:177px;top:363px;width:294px;height:20px;background:#2b2b2b;border-radius:2px;"></div>
<div class="t" id="t50" style="left:182px;top:365.5px;height:16px;line-height:16px;font-size:12px;color:#555;font-family:'Liberation Sans',sans-serif;white-space:nowrap;transform:scaleX(0.9225);transform-origin:0 50%;">C</div>
<div class="t" id="t51" style="left:194px;top:364.5px;height:18px;line-height:18px;font-size:13px;color:#d7bd72;font-family:'Liberation Sans',sans-serif;white-space:nowrap;transform:scaleX(0.9507);transform-origin:0 50%;">GridDuplicator</div>
<div style="left:177px;top:387px;width:192px;height:17px;background:#4a4a4a;border-radius:3px;"></div>
<div class="t" id="t52" style="left:180px;top:387.0px;height:18px;line-height:18px;font-size:13px;color:#e6e6e6;font-family:'Liberation Sans',sans-serif;white-space:nowrap;transform:scaleX(0.9176);transform-origin:0 50%;">Text (Lines)/ Duplicator</div>
<svg style="left:355px;top:390px;" width="12" height="10" viewBox="0 0 12 10"><path d="M2 3 L6 7 L10 3" fill="none" stroke="#c8c8c8" stroke-width="1"/></svg>
<div style="left:177px;top:409px;width:94px;height:16px;background:#2b2b2b;border-radius:2px;"></div>
<div class="t" id="t53" style="left:182px;top:409.5px;height:16px;line-height:16px;font-size:12px;color:#555;font-family:'Liberation Sans',sans-serif;white-space:nowrap;transform:scaleX(1.0467);transform-origin:0 50%;">#</div>
<div class="t" id="t54" style="left:194px;top:408.5px;height:18px;line-height:18px;font-size:13px;color:#9a9a9a;font-family:'Liberation Sans',sans-serif;white-space:nowrap;transform:scaleX(0.9676);transform-origin:0 50%;">1</div>
<div style="left:177px;top:431px;width:16px;height:16px;background:#2b2b2b;border-radius:2px;"></div>
<div style="left:177px;top:453px;width:84px;height:16px;background:#2b2b2b;border-radius:2px;"></div>
<div style="left:261px;top:453px;width:10px;height:16px;background:#303030;border-radius:0 2px 2px 0;"></div>
<div class="t" id="t55" style="left:182px;top:453.5px;height:16px;line-height:16px;font-size:12px;color:#666;font-family:'Liberation Sans',sans-serif;white-space:nowrap;transform:scaleX(1.0467);transform-origin:0 50%;">#</div>
<div class="t" id="t56" style="left:194px;top:452.5px;height:18px;line-height:18px;font-size:13px;color:#d7bd72;font-family:'Liberation Sans',sans-serif;white-space:nowrap;transform:scaleX(0.9404);transform-origin:0 50%;">0.0</div>
<svg style="left:250px;top:456px;" width="8" height="10" viewBox="0 0 8 10"><path d="M7 1 L1 5 L7 9 Z" fill="#d6b870"/></svg>
<svg style="left:262px;top:456px;" width="8" height="10" viewBox="0 0 8 10"><path d="M1 1 L7 5 L1 9 Z" fill="#777"/></svg>
<div style="left:6px;top:472px;width:482px;height:557px;background:#2a2a2a;"></div>
<div style="left:474px;top:311px;width:14px;height:718px;background:#2c2c2c;"></div>
<div style="left:476px;top:312px;width:10px;height:711px;background:#4e4e4e;border-radius:5px;"></div>
<div style="left:488px;top:85px;width:6px;height:944px;background:#121212;"></div>
<div style="left:494px;top:85px;width:30px;height:535px;background:#434343;"></div>
<div style="left:503px;top:89px;width:2px;height:2px;background:#777;"></div>
<div style="left:508px;top:89px;width:2px;height:2px;background:#777;"></div>
<div style="left:513px;top:89px;width:2px;height:2px;background:#777;"></div>
<div style="left:495px;top:96px;width:28px;height:28px;background:#282828;border-radius:4px;"></div>
<svg style="left:498px;top:99px;" width="22" height="22" viewBox="0 0 22 22"><path d="M6 3 L6 17 L9.5 13.5 L12 19 L14.5 18 L12 12.5 L17 12.5 Z" fill="none" stroke="#36d06c" stroke-width="1.4" stroke-linejoin="round"/></svg>
<svg style="left:498px;top:129px;" width="22" height="22" viewBox="0 0 22 22"><path d="M6 3 L18 11 L11 12 L6 19 Z" fill="#e2e2e2"/></svg>
<svg style="left:498px;top:159px;" width="22" height="22" viewBox="0 0 22 22"><path d="M5 4 L14 8 L17 15 L15 17 L8 14 Z" fill="#e2e2e2"/><circle cx="11" cy="11" r="1.3" fill="#333"/><path d="M15 17 L18 20" stroke="#e2e2e2" stroke-width="2.5"/></svg>
<svg style="left:498px;top:189px;" width="22" height="22" viewBox="0 0 22 22"><path d="M5 18 L16 6" stroke="#e2e2e2" stroke-width="3"/><circle cx="17" cy="5" r="1.8" fill="#e2e2e2"/><path d="M3 20 L5 18" stroke="#e2e2e2" stroke-width="1"/></svg>
<svg style="left:498px;top:219px;" width="22" height="22" viewBox="0 0 22 22"><rect x="3" y="7" width="12" height="9" rx="1" fill="#e2e2e2"/><path d="M15 11 L20 7 V16 L15 12 Z" fill="#e2e2e2"/><circle cx="6" cy="6" r="1.3" fill="#e2e2e2"/></svg>
<svg style="left:498px;top:249px;" width="22" height="22" viewBox="0 0 22 22"><path d="M4 18 L18 4" stroke="#e2e2e2" stroke-width="1.2"/></svg>
<svg style="left:498px;top:279px;" width="22" height="22" viewBox="0 0 22 22"><path d="M4 4 H18 V8 H13 V19 H9 V8 H4 Z" fill="#e2e2e2"/></svg>
<svg style="left:498px;top:309px;" width="22" height="22" viewBox="0 0 22 22"><path d="M4 4 L11 9 L8 10 Z" fill="#e2e2e2"/><path d="M4 18 H18 M18 18 L15 5 M4 18 V10" fill="none" stroke="#e2e2e2" stroke-width="1.2" stroke-dasharray="2 2"/></svg>
<svg style="left:498px;top:339px;" width="22" height="22" viewBox="0 0 22 22"><rect x="4" y="4" width="14" height="14" fill="#e2e2e2"/></svg>
<svg style="left:498px;top:369px;" width="22" height="22" viewBox="0 0 22 22"><circle cx="11" cy="11" r="7.5" fill="#e2e2e2"/></svg>
<svg style="left:498px;top:399px;" width="22" height="22" viewBox="0 0 22 22"><path d="M11 3 L19 9 L16 18 H6 L3 9 Z" fill="#e2e2e2"/></svg>
<svg style="left:498px;top:429px;" width="22" height="22" viewBox="0 0 22 22"><path d="M11 2 L13.5 8.5 L20 8.5 L15 12.5 L17 19 L11 15 L5 19 L7 12.5 L2 8.5 L8.5 8.5 Z" fill="#e2e2e2"/></svg>
<svg style="left:498px;top:459px;" width="22" height="22" viewBox="0 0 22 22"><path d="M17.4 11 A6.4 6.4 0 1 0 11 17.4" fill="none" stroke="#e2e2e2" stroke-width="3.4"/></svg>
<svg style="left:498px;top:489px;" width="22" height="22" viewBox="0 0 22 22"><path d="M11 2 Q12 10 20 11 Q12 12 11 20 Q10 12 2 11 Q10 10 11 2 Z" fill="#e2e2e2"/></svg>
<svg style="left:498px;top:519px;" width="22" height="22" viewBox="0 0 22 22"><circle cx="11" cy="11" r="5" fill="none" stroke="#e2e2e2" stroke-width="3.5"/><rect x="9.5" y="1.5" width="3" height="4" fill="#e2e2e2" transform="rotate(0 11 11)"/><rect x="9.5" y="1.5" width="3" height="4" fill="#e2e2e2" transform="rotate(45 11 11)"/><rect x="9.5" y="1.5" width="3" height="4" fill="#e2e2e2" transform="rotate(90 11 11)"/><rect x="9.5" y="1.5" width="3" height="4" fill="#e2e2e2" transform="rotate(135 11 11)"/><rect x="9.5" y="1.5" width="3" height="4" fill="#e2e2e2" transform="rotate(180 11 11)"/><rect x="9.5" y="1.5" width="3" height="4" fill="#e2e2e2" transform="rotate(225 11 11)"/><rect x="9.5" y="1.5" width="3" height="4" fill="#e2e2e2" transform="rotate(270 11 11)"/><rect x="9.5" y="1.5" width="3" height="4" fill="#e2e2e2" transform="rotate(315 11 11)"/></svg>
<svg style="left:498px;top:549px;" width="22" height="22" viewBox="0 0 22 22"><path d="M2 11 H20 M6 7 L2 11 L6 15 M16 7 L20 11 L16 15" fill="none" stroke="#e2e2e2" stroke-width="2.2"/></svg>
<svg style="left:500px;top:601px;" width="18" height="14" viewBox="0 0 18 14"><path d="M3 2 L8 7 L3 12 M9 2 L14 7 L9 12" fill="none" stroke="#9a9a9a" stroke-width="1.2"/></svg>
<div style="left:524px;top:85px;width:6px;height:544px;background:#121212;"></div>
<div style="left:530px;top:85px;width:1057px;height:21px;background:#1c1c1c;"></div>
<div style="left:530px;top:85px;width:96px;height:21px;background:#444444;border-radius:4px 4px 0 0;"></div>
<div class="t" id="t57" style="left:535px;top:87.5px;height:18px;line-height:18px;font-size:13px;color:#dfe3ea;font-family:'Liberation Sans',sans-serif;white-space:nowrap;transform:scaleX(0.9260);transform-origin:0 50%;">duplicator blend</div>
<div style="left:530px;top:106px;width:1057px;height:21px;background:#484848;"></div>
<div style="left:530px;top:127px;width:20px;height:471px;background:#484848;"></div>
<div class="t" id="t58" style="left:535px;top:110.5px;height:15px;line-height:15px;font-size:11px;color:#bdbdbd;font-family:'Liberation Sans',sans-serif;white-space:nowrap;transform:scaleX(1.0323);transform-origin:0 50%;">px</div>
<div style="left:550px;top:127px;width:1037px;height:471px;background:#000;"></div>
<svg style="left:530px;top:106px;" width="1057" height="21" viewBox="0 0 1057 21"><rect x="22.1" y="17" width="1" height="4" fill="#9a9a9a"/><rect x="33.9" y="17" width="1" height="4" fill="#9a9a9a"/><rect x="45.7" y="17" width="1" height="4" fill="#9a9a9a"/><rect x="57.5" y="13" width="1.2" height="8" fill="#9a9a9a"/><rect x="69.3" y="17" width="1" height="4" fill="#9a9a9a"/><rect x="81.1" y="17" width="1" height="4" fill="#9a9a9a"/><rect x="92.9" y="17" width="1" height="4" fill="#9a9a9a"/><rect x="104.7" y="17" width="1" height="4" fill="#9a9a9a"/><rect x="116.5" y="13" width="1.2" height="8" fill="#9a9a9a"/><rect x="128.3" y="17" width="1" height="4" fill="#9a9a9a"/><rect x="140.1" y="17" width="1" height="4" fill="#9a9a9a"/><rect x="151.9" y="17" width="1" height="4" fill="#9a9a9a"/><rect x="163.7" y="17" width="1" height="4" fill="#9a9a9a"/><rect x="175.5" y="13" width="1.2" height="8" fill="#9a9a9a"/><rect x="187.3" y="17" width="1" height="4" fill="#9a9a9a"/><rect x="199.1" y="17" width="1" height="4" fill="#9a9a9a"/><rect x="210.9" y="17" width="1" height="4" fill="#9a9a9a"/><rect x="222.7" y="17" width="1" height="4" fill="#9a9a9a"/><rect x="234.5" y="13" width="1.2" height="8" fill="#9a9a9a"/><rect x="246.3" y="17" width="1" height="4" fill="#9a9a9a"/><rect x="258.1" y="17" width="1" height="4" fill="#9a9a9a"/><rect x="269.9" y="17" width="1" height="4" fill="#9a9a9a"/><rect x="281.7" y="17" width="1" height="4" fill="#9a9a9a"/><rect x="293.5" y="13" width="1.2" height="8" fill="#9a9a9a"/><rect x="305.3" y="17" width="1" height="4" fill="#9a9a9a"/><rect x="317.1" y="17" width="1" height="4" fill="#9a9a9a"/><rect x="328.9" y="17" width="1" height="4" fill="#9a9a9a"/><rect x="340.7" y="17" width="1" height="4" fill="#9a9a9a"/><rect x="352.5" y="13" width="1.2" height="8" fill="#9a9a9a"/><rect x="364.3" y="17" width="1" height="4" fill="#9a9a9a"/><rect x="376.1" y="17" width="1" height="4" fill="#9a9a9a"/><rect x="387.9" y="17" width="1" height="4" fill="#9a9a9a"/><rect x="399.7" y="17" width="1" height="4" fill="#9a9a9a"/><rect x="411.5" y="13" width="1.2" height="8" fill="#9a9a9a"/><rect x="423.3" y="17" width="1" height="4" fill="#9a9a9a"/><rect x="435.1" y="17" width="1" height="4" fill="#9a9a9a"/><rect x="446.9" y="17" width="1" height="4" fill="#9a9a9a"/><rect x="458.7" y="17" width="1" height="4" fill="#9a9a9a"/><rect x="470.5" y="13" width="1.2" height="8" fill="#9a9a9a"/><rect x="482.3" y="17" width="1" height="4" fill="#9a9a9a"/><rect x="494.1" y="17" width="1" height="4" fill="#9a9a9a"/><rect x="505.9" y="17" width="1" height="4" fill="#9a9a9a"/><rect x="517.7" y="17" width="1" height="4" fill="#9a9a9a"/><rect x="529.5" y="13" width="1.2" height="8" fill="#9a9a9a"/><rect x="541.3" y="17" width="1" height="4" fill="#9a9a9a"/><rect x="553.1" y="17" width="1" height="4" fill="#9a9a9a"/><rect x="564.9" y="17" width="1" height="4" fill="#9a9a9a"/><rect x="576.7" y="17" width="1" height="4" fill="#9a9a9a"/><rect x="588.5" y="13" width="1.2" height="8" fill="#9a9a9a"/><rect x="600.3" y="17" width="1" height="4" fill="#9a9a9a"/><rect x="612.1" y="17" width="1" height="4" fill="#9a9a9a"/><rect x="623.9" y="17" width="1" height="4" fill="#9a9a9a"/><rect x="635.7" y="17" width="1" height="4" fill="#9a9a9a"/><rect x="647.5" y="13" width="1.2" height="8" fill="#9a9a9a"/><rect x="659.3" y="17" width="1" height="4" fill="#9a9a9a"/><rect x="671.1" y="17" width="1" height="4" fill="#9a9a9a"/><rect x="682.9" y="17" width="1" height="4" fill="#9a9a9a"/><rect x="694.7" y="17" width="1" height="4" fill="#9a9a9a"/><rect x="706.5" y="13" width="1.2" height="8" fill="#9a9a9a"/><rect x="718.3" y="17" width="1" height="4" fill="#9a9a9a"/><rect x="730.1" y="17" width="1" height="4" fill="#9a9a9a"/><rect x="741.9" y="17" width="1" height="4" fill="#9a9a9a"/><rect x="753.7" y="17" width="1" height="4" fill="#9a9a9a"/><rect x="765.5" y="13" width="1.2" height="8" fill="#9a9a9a"/><rect x="777.3" y="17" width="1" height="4" fill="#9a9a9a"/><rect x="789.1" y="17" width="1" height="4" fill="#9a9a9a"/><rect x="800.9" y="17" width="1" height="4" fill="#9a9a9a"/><rect x="812.7" y="17" width="1" height="4" fill="#9a9a9a"/><rect x="824.5" y="13" width="1.2" height="8" fill="#9a9a9a"/><rect x="836.3" y="17" width="1" height="4" fill="#9a9a9a"/><rect x="848.1" y="17" width="1" height="4" fill="#9a9a9a"/><rect x="859.9" y="17" width="1" height="4" fill="#9a9a9a"/><rect x="871.7" y="17" width="1" height="4" fill="#9a9a9a"/><rect x="883.5" y="13" width="1.2" height="8" fill="#9a9a9a"/><rect x="895.3" y="17" width="1" height="4" fill="#9a9a9a"/><rect x="907.1" y="17" width="1" height="4" fill="#9a9a9a"/><rect x="918.9" y="17" width="1" height="4" fill="#9a9a9a"/><rect x="930.7" y="17" width="1" height="4" fill="#9a9a9a"/><rect x="942.5" y="13" width="1.2" height="8" fill="#9a9a9a"/><rect x="954.3" y="17" width="1" height="4" fill="#9a9a9a"/><rect x="966.1" y="17" width="1" height="4" fill="#9a9a9a"/><rect x="977.9" y="17" width="1" height="4" fill="#9a9a9a"/><rect x="989.7" y="17" width="1" height="4" fill="#9a9a9a"/><rect x="1001.5" y="13" width="1.2" height="8" fill="#9a9a9a"/><rect x="1013.3" y="17" width="1" height="4" fill="#9a9a9a"/><rect x="1025.1" y="17" width="1" height="4" fill="#9a9a9a"/><rect x="1036.9" y="17" width="1" height="4" fill="#9a9a9a"/><rect x="1048.7" y="17" width="1" height="4" fill="#9a9a9a"/></svg>
<div style="left:548.0px;top:108px;width:80px;height:13px;line-height:13px;text-align:center;font-size:11px;color:#c4c4c4;font-family:'Liberation Sans',sans-serif;transform:scaleX(0.95);">-1200</div>
<div style="left:607.0px;top:108px;width:80px;height:13px;line-height:13px;text-align:center;font-size:11px;color:#c4c4c4;font-family:'Liberation Sans',sans-serif;transform:scaleX(0.95);">-1050</div>
<div style="left:666.0px;top:108px;width:80px;height:13px;line-height:13px;text-align:center;font-size:11px;color:#c4c4c4;font-family:'Liberation Sans',sans-serif;transform:scaleX(0.95);">-900</div>
<div style="left:725.0px;top:108px;width:80px;height:13px;line-height:13px;text-align:center;font-size:11px;color:#c4c4c4;font-family:'Liberation Sans',sans-serif;transform:scaleX(0.95);">-750</div>
<div style="left:784.0px;top:108px;width:80px;height:13px;line-height:13px;text-align:center;font-size:11px;color:#c4c4c4;font-family:'Liberation Sans',sans-serif;transform:scaleX(0.95);">-600</div>
<div style="left:843.0px;top:108px;width:80px;height:13px;line-height:13px;text-align:center;font-size:11px;color:#c4c4c4;font-family:'Liberation Sans',sans-serif;transform:scaleX(0.95);">-450</div>
<div style="left:902.0px;top:108px;width:80px;height:13px;line-height:13px;text-align:center;font-size:11px;color:#c4c4c4;font-family:'Liberation Sans',sans-serif;transform:scaleX(0.95);">-300</div>
<div style="left:961.0px;top:108px;width:80px;height:13px;line-height:13px;text-align:center;font-size:11px;color:#c4c4c4;font-family:'Liberation Sans',sans-serif;transform:scaleX(0.95);">-150</div>
<div style="left:1020.0px;top:108px;width:80px;height:13px;line-height:13px;text-align:center;font-size:11px;color:#c4c4c4;font-family:'Liberation Sans',sans-serif;transform:scaleX(0.95);">0</div>
<div style="left:1079.0px;top:108px;width:80px;height:13px;line-height:13px;text-align:center;font-size:11px;color:#c4c4c4;font-family:'Liberation Sans',sans-serif;transform:scaleX(0.95);">150</div>
<div style="left:1138.0px;top:108px;width:80px;height:13px;line-height:13px;text-align:center;font-size:11px;color:#c4c4c4;font-family:'Liberation Sans',sans-serif;transform:scaleX(0.95);">300</div>
<div style="left:1197.0px;top:108px;width:80px;height:13px;line-height:13px;text-align:center;font-size:11px;color:#c4c4c4;font-family:'Liberation Sans',sans-serif;transform:scaleX(0.95);">450</div>
<div style="left:1256.0px;top:108px;width:80px;height:13px;line-height:13px;text-align:center;font-size:11px;color:#c4c4c4;font-family:'Liberation Sans',sans-serif;transform:scaleX(0.95);">600</div>
<div style="left:1315.0px;top:108px;width:80px;height:13px;line-height:13px;text-align:center;font-size:11px;color:#c4c4c4;font-family:'Liberation Sans',sans-serif;transform:scaleX(0.95);">750</div>
<div style="left:1374.0px;top:108px;width:80px;height:13px;line-height:13px;text-align:center;font-size:11px;color:#c4c4c4;font-family:'Liberation Sans',sans-serif;transform:scaleX(0.95);">900</div>
<div style="left:1433.0px;top:108px;width:80px;height:13px;line-height:13px;text-align:center;font-size:11px;color:#c4c4c4;font-family:'Liberation Sans',sans-serif;transform:scaleX(0.95);">1050</div>
<div style="left:1492.0px;top:108px;width:80px;height:13px;line-height:13px;text-align:center;font-size:11px;color:#c4c4c4;font-family:'Liberation Sans',sans-serif;transform:scaleX(0.95);">1200</div>
<svg style="left:530px;top:127px;" width="20" height="471" viewBox="0 0 20 471"><rect x="16" y="464.7" width="4" height="1" fill="#9a9a9a"/><rect x="16" y="452.9" width="4" height="1" fill="#9a9a9a"/><rect x="16" y="441.1" width="4" height="1" fill="#9a9a9a"/><rect x="16" y="429.3" width="4" height="1" fill="#9a9a9a"/><rect x="13" y="417.5" width="8" height="1.2" fill="#9a9a9a"/><rect x="16" y="405.7" width="4" height="1" fill="#9a9a9a"/><rect x="16" y="393.9" width="4" height="1" fill="#9a9a9a"/><rect x="16" y="382.1" width="4" height="1" fill="#9a9a9a"/><rect x="16" y="370.3" width="4" height="1" fill="#9a9a9a"/><rect x="13" y="358.5" width="8" height="1.2" fill="#9a9a9a"/><rect x="16" y="346.7" width="4" height="1" fill="#9a9a9a"/><rect x="16" y="334.9" width="4" height="1" fill="#9a9a9a"/><rect x="16" y="323.1" width="4" height="1" fill="#9a9a9a"/><rect x="16" y="311.3" width="4" height="1" fill="#9a9a9a"/><rect x="13" y="299.5" width="8" height="1.2" fill="#9a9a9a"/><rect x="16" y="287.7" width="4" height="1" fill="#9a9a9a"/><rect x="16" y="275.9" width="4" height="1" fill="#9a9a9a"/><rect x="16" y="264.1" width="4" height="1" fill="#9a9a9a"/><rect x="16" y="252.3" width="4" height="1" fill="#9a9a9a"/><rect x="13" y="240.5" width="8" height="1.2" fill="#9a9a9a"/><rect x="16" y="228.7" width="4" height="1" fill="#9a9a9a"/><rect x="16" y="216.9" width="4" height="1" fill="#9a9a9a"/><rect x="16" y="205.1" width="4" height="1" fill="#9a9a9a"/><rect x="16" y="193.3" width="4" height="1" fill="#9a9a9a"/><rect x="13" y="181.5" width="8" height="1.2" fill="#9a9a9a"/><rect x="16" y="169.7" width="4" height="1" fill="#9a9a9a"/><rect x="16" y="157.9" width="4" height="1" fill="#9a9a9a"/><rect x="16" y="146.1" width="4" height="1" fill="#9a9a9a"/><rect x="16" y="134.3" width="4" height="1" fill="#9a9a9a"/><rect x="13" y="122.5" width="8" height="1.2" fill="#9a9a9a"/><rect x="16" y="110.7" width="4" height="1" fill="#9a9a9a"/><rect x="16" y="98.9" width="4" height="1" fill="#9a9a9a"/><rect x="16" y="87.1" width="4" height="1" fill="#9a9a9a"/><rect x="16" y="75.3" width="4" height="1" fill="#9a9a9a"/><rect x="13" y="63.5" width="8" height="1.2" fill="#9a9a9a"/><rect x="16" y="51.7" width="4" height="1" fill="#9a9a9a"/><rect x="16" y="39.9" width="4" height="1" fill="#9a9a9a"/><rect x="16" y="28.1" width="4" height="1" fill="#9a9a9a"/><rect x="16" y="16.3" width="4" height="1" fill="#9a9a9a"/><rect x="13" y="4.5" width="8" height="1.2" fill="#9a9a9a"/></svg>
<div style="left:507.5px;top:538.5px;width:60px;height:13px;line-height:13px;text-align:center;font-size:11px;color:#c4c4c4;font-family:'Liberation Sans',sans-serif;transform:rotate(-90deg) scaleX(0.95);">-450</div>
<div style="left:507.5px;top:479.5px;width:60px;height:13px;line-height:13px;text-align:center;font-size:11px;color:#c4c4c4;font-family:'Liberation Sans',sans-serif;transform:rotate(-90deg) scaleX(0.95);">-300</div>
<div style="left:507.5px;top:420.5px;width:60px;height:13px;line-height:13px;text-align:center;font-size:11px;color:#c4c4c4;font-family:'Liberation Sans',sans-serif;transform:rotate(-90deg) scaleX(0.95);">-150</div>
<div style="left:507.5px;top:361.5px;width:60px;height:13px;line-height:13px;text-align:center;font-size:11px;color:#c4c4c4;font-family:'Liberation Sans',sans-serif;transform:rotate(-90deg) scaleX(0.95);">0</div>
<div style="left:507.5px;top:302.5px;width:60px;height:13px;line-height:13px;text-align:center;font-size:11px;color:#c4c4c4;font-family:'Liberation Sans',sans-serif;transform:rotate(-90deg) scaleX(0.95);">150</div>
<div style="left:507.5px;top:243.5px;width:60px;height:13px;line-height:13px;text-align:center;font-size:11px;color:#c4c4c4;font-family:'Liberation Sans',sans-serif;transform:rotate(-90deg) scaleX(0.95);">300</div>
<div style="left:507.5px;top:184.5px;width:60px;height:13px;line-height:13px;text-align:center;font-size:11px;color:#c4c4c4;font-family:'Liberation Sans',sans-serif;transform:rotate(-90deg) scaleX(0.95);">450</div>
<div style="left:507.5px;top:125.5px;width:60px;height:13px;line-height:13px;text-align:center;font-size:11px;color:#c4c4c4;font-family:'Liberation Sans',sans-serif;transform:rotate(-90deg) scaleX(0.95);">600</div>
<div style="left:682px;top:155px;width:755px;height:426px;background:#1b1b1b;"></div>
<svg style="left:682px;top:155px;" width="755" height="425" viewBox="0 0 755 425"><circle cx="278.2" cy="75.6" r="13.1" fill="#c4c4c4"/><circle cx="317.3" cy="89.6" r="8.5" fill="#fff"/><circle cx="366.7" cy="81.2" r="8.3" fill="#000"/><circle cx="463.0" cy="85.5" r="14" fill="#53f47a"/><circle cx="505.2" cy="91.7" r="9.2" fill="#8b8484"/><circle cx="424.0" cy="134.9" r="9.2" fill="#53f47a"/><circle cx="244.3" cy="152.4" r="13.4" fill="#c4c4c4"/><circle cx="321.5" cy="148.9" r="15.3" fill="#fff"/><circle cx="397.8" cy="155.8" r="7.9" fill="#000"/><circle cx="509.0" cy="149.5" r="14" fill="#8b8484"/><circle cx="252.1" cy="188.6" r="11.2" fill="#c4c4c4"/><circle cx="326.3" cy="182.4" r="8.3" fill="#fff"/><circle cx="386.2" cy="199.5" r="13.6" fill="#000"/><circle cx="395.3" cy="217.9" r="14.3" fill="#000"/><circle cx="462.4" cy="183.2" r="13.6" fill="#53f47a"/><circle cx="472.6" cy="192.7" r="10.2" fill="#8b8484"/><circle cx="434.1" cy="218.2" r="9.5" fill="#53f47a"/><circle cx="264.4" cy="222.6" r="8.5" fill="#c4c4c4"/><circle cx="488.2" cy="237.9" r="9.2" fill="#8b8484"/><circle cx="320.5" cy="241.0" r="12.6" fill="#fff"/><circle cx="253.9" cy="265.5" r="14.6" fill="#c4c4c4"/><circle cx="451.8" cy="269.2" r="12.6" fill="#53f47a"/><circle cx="301.8" cy="293.0" r="10.5" fill="#fff"/><circle cx="341.6" cy="295.4" r="13.3" fill="#fff"/><circle cx="394.0" cy="300.9" r="15.3" fill="#000"/><circle cx="492.6" cy="295.7" r="15.6" fill="#8b8484"/><circle cx="373.2" cy="323.0" r="9.9" fill="#000"/><circle cx="462.7" cy="319.9" r="8.2" fill="#53f47a"/><circle cx="277.3" cy="327.4" r="8.5" fill="#c4c4c4"/><circle cx="499.1" cy="346.1" r="11.2" fill="#8b8484"/></svg>
<div class="t" id="t59" style="left:570px;top:499.8px;height:16px;line-height:16px;font-size:12px;color:#f2f2f2;font-family:'Liberation Sans',sans-serif;white-space:nowrap;transform:scaleX(0.9159);transform-origin:0 50%;">Hold S</div>
<div class="t" id="t60" style="left:606px;top:499.8px;height:16px;line-height:16px;font-size:12px;color:rgba(255,255,255,0.2);font-family:'Liberation Sans',sans-serif;white-space:nowrap;transform:scaleX(0.9711);transform-origin:0 50%;">Direct Layer Selection</div>
<div class="t" id="t61" style="left:570px;top:513.7px;height:16px;line-height:16px;font-size:12px;color:#f2f2f2;font-family:'Liberation Sans',sans-serif;white-space:nowrap;transform:scaleX(0.8815);transform-origin:0 50%;">Space</div>
<div class="t" id="t62" style="left:603px;top:513.7px;height:16px;line-height:16px;font-size:12px;color:rgba(255,255,255,0.2);font-family:'Liberation Sans',sans-serif;white-space:nowrap;transform:scaleX(0.9689);transform-origin:0 50%;">Play/ Stop</div>
<div class="t" id="t63" style="left:570px;top:527.9px;height:16px;line-height:16px;font-size:12px;color:#f2f2f2;font-family:'Liberation Sans',sans-serif;white-space:nowrap;transform:scaleX(0.9289);transform-origin:0 50%;">Space + click + drag</div>
<div class="t" id="t64" style="left:674px;top:527.9px;height:16px;line-height:16px;font-size:12px;color:rgba(255,255,255,0.2);font-family:'Liberation Sans',sans-serif;white-space:nowrap;transform:scaleX(0.8895);transform-origin:0 50%;">Pan</div>
<div class="t" id="t65" style="left:570px;top:542.0px;height:16px;line-height:16px;font-size:12px;color:#f2f2f2;font-family:'Liberation Sans',sans-serif;white-space:nowrap;transform:scaleX(0.9694);transform-origin:0 50%;">Alt + click + drag</div>
<div class="t" id="t66" style="left:658px;top:542.0px;height:16px;line-height:16px;font-size:12px;color:rgba(255,255,255,0.2);font-family:'Liberation Sans',sans-serif;white-space:nowrap;transform:scaleX(1.0106);transform-origin:0 50%;">Move Pivot Point</div>
<div class="t" id="t67" style="left:570px;top:555.9px;height:16px;line-height:16px;font-size:12px;color:#f2f2f2;font-family:'Liberation Sans',sans-serif;white-space:nowrap;transform:scaleX(0.9993);transform-origin:0 50%;">Shift</div>
<div class="t" id="t68" style="left:597px;top:555.9px;height:16px;line-height:16px;font-size:12px;color:rgba(255,255,255,0.2);font-family:'Liberation Sans',sans-serif;white-space:nowrap;transform:scaleX(0.9298);transform-origin:0 50%;">Enable Snapping</div>
<div class="t" id="t69" style="left:998px;top:576.0px;height:16px;line-height:16px;font-size:12px;color:#f2f2f2;font-family:'Liberation Sans',sans-serif;white-space:nowrap;transform:scaleX(1.0211);transform-origin:0 50%;">Viewport Quality: High</div>
<div style="left:530px;top:598px;width:1057px;height:22px;background:#474747;"></div>
<div style="left:535px;top:601px;width:78px;height:16px;background:#2d2d2d;border-radius:3px;"></div>
<div class="t" id="t70" style="left:539px;top:600.5px;height:18px;line-height:18px;font-size:13px;color:#e2e2e2;font-family:'Liberation Sans',sans-serif;white-space:nowrap;transform:scaleX(0.8451);transform-origin:0 50%;">39%</div>
<svg style="left:597px;top:604px;" width="12" height="10" viewBox="0 0 12 10"><path d="M2 3 L6 7 L10 3" fill="none" stroke="#c8c8c8" stroke-width="1"/></svg>
<div style="left:866px;top:600px;width:100px;height:19px;background:#2c2c2c;border-radius:3px;"></div>
<div style="left:886px;top:600px;width:1px;height:19px;background:#232323;"></div>
<div style="left:906px;top:600px;width:1px;height:19px;background:#232323;"></div>
<div style="left:926px;top:600px;width:1px;height:19px;background:#232323;"></div>
<div style="left:946px;top:600px;width:1px;height:19px;background:#232323;"></div>
<svg style="left:866px;top:600px;" width="20" height="19" viewBox="0 0 20 19"><rect x="3" y="4" width="2" height="11" fill="#d6d6d6"/><path d="M15 4 L6 9.5 L15 15 Z" fill="#d6d6d6"/></svg>
<svg style="left:886px;top:600px;" width="20" height="19" viewBox="0 0 20 19"><path d="M12 4 L4 9.5 L12 15 Z" fill="#d6d6d6"/><rect x="14" y="4" width="2" height="11" fill="#d6d6d6"/></svg>
<svg style="left:906px;top:600px;" width="20" height="19" viewBox="0 0 20 19"><path d="M6 4 L15 9.5 L6 15 Z" fill="#d6d6d6"/><rect x="0" y="0" width="0" height="0" fill="#d6d6d6"/></svg>
<svg style="left:926px;top:600px;" width="20" height="19" viewBox="0 0 20 19"><rect x="4" y="4" width="2" height="11" fill="#d6d6d6"/><path d="M8 4 L16 9.5 L8 15 Z" fill="#d6d6d6"/></svg>
<svg style="left:946px;top:600px;" width="20" height="19" viewBox="0 0 20 19"><path d="M4 4 L13 9.5 L4 15 Z" fill="#d6d6d6"/><rect x="14" y="4" width="2" height="11" fill="#d6d6d6"/></svg>
<div style="left:971px;top:600px;width:20px;height:19px;background:#2c2c2c;border-radius:3px;"></div>
<svg style="left:971px;top:600px;" width="20" height="19" viewBox="0 0 20 19"><path d="M4 8 V15 H16 V8" fill="none" stroke="#d6d6d6" stroke-width="1.5"/><path d="M7 11 Q8 6 13 6" fill="none" stroke="#d6d6d6" stroke-width="1.5"/><path d="M12 3 L16 6 L12 9 Z" fill="#d6d6d6"/></svg>
<div style="left:1232px;top:600px;width:37px;height:19px;background:#2c2c2c;border-radius:3px;"></div>
<svg style="left:1234px;top:603px;" width="14" height="12" viewBox="0 0 14 12"><path d="M4 2 H13 V10 H4 L0 6 Z" fill="#d0d0d0"/><circle cx="4.5" cy="6" r="1.5" fill="#2c2c2c"/></svg>
<div class="t" id="t71" style="left:1257px;top:601.0px;height:18px;line-height:18px;font-size:13px;color:#8fa6c8;font-family:'Liberation Sans',sans-serif;white-space:nowrap;transform:scaleX(0.9676);transform-origin:0 50%;">0</div>
<div style="left:1272px;top:600px;width:31px;height:19px;background:#2c2c2c;border-radius:3px;"></div>
<div style="left:1290px;top:600px;width:1px;height:19px;background:#232323;"></div>
<svg style="left:1274px;top:602px;" width="16" height="15" viewBox="0 0 16 15"><path d="M2 6 H5 L9 2 V13 L5 9 H2 Z" fill="#39c66b"/><path d="M11 5 Q13 7.5 11 10 M12.5 3 Q16 7.5 12.5 12" fill="none" stroke="#39c66b" stroke-width="1.3"/></svg>
<svg style="left:1293px;top:604px;" width="8" height="11" viewBox="0 0 8 11"><path d="M1.5 1.5 L6.5 5.5 L1.5 9.5 Z" fill="none" stroke="#8a8a8a" stroke-width="1"/></svg>
<div style="left:1307px;top:600px;width:31px;height:19px;background:#2c2c2c;border-radius:3px;"></div>
<div style="left:1325px;top:600px;width:1px;height:19px;background:#232323;"></div>
<svg style="left:1309px;top:602px;" width="16" height="15" viewBox="0 0 16 15"><path d="M3 11 V6 A5 5 0 0 1 13 6 V9" fill="none" stroke="#d0d0d0" stroke-width="2.5"/></svg>
<svg style="left:1328px;top:604px;" width="8" height="11" viewBox="0 0 8 11"><path d="M1.5 1.5 L6.5 5.5 L1.5 9.5 Z" fill="none" stroke="#8a8a8a" stroke-width="1"/></svg>
<div style="left:1342px;top:600px;width:31px;height:19px;background:#2c2c2c;border-radius:3px;"></div>
<div style="left:1360px;top:600px;width:1px;height:19px;background:#232323;"></div>
<svg style="left:1343px;top:602px;" width="16" height="15" viewBox="0 0 16 15"><path d="M5 1 V14 M11 1 V14 M1 5 H15 M1 10 H15" stroke="#d0d0d0" stroke-width="1.2"/></svg>
<svg style="left:1363px;top:604px;" width="8" height="11" viewBox="0 0 8 11"><path d="M1.5 1.5 L6.5 5.5 L1.5 9.5 Z" fill="none" stroke="#8a8a8a" stroke-width="1"/></svg>
<div style="left:1377px;top:600px;width:19px;height:19px;background:#2c2c2c;border-radius:3px;"></div>
<svg style="left:1378px;top:602px;" width="17" height="15" viewBox="0 0 17 15"><rect x="1" y="3" width="3" height="3" fill="#39c66b"/><rect x="1" y="8" width="3" height="5" fill="#39c66b"/><rect x="6" y="2" width="10" height="6" fill="none" stroke="#39c66b" stroke-width="1.5"/><rect x="6" y="10" width="10" height="3" fill="#39c66b"/></svg>
<div style="left:1400px;top:600px;width:19px;height:19px;background:#2c2c2c;border-radius:3px;"></div>
<svg style="left:1401px;top:602px;" width="17" height="15" viewBox="0 0 17 15"><path d="M2 3 L7 7.5 L2 12 M7 3 L12 7.5 L7 12 M12 3 L16 7.5 L12 12" fill="none" stroke="#d0d0d0" stroke-width="1.4"/></svg>
<div style="left:1423px;top:600px;width:31px;height:19px;background:#2c2c2c;border-radius:3px;"></div>
<div style="left:1441px;top:600px;width:1px;height:19px;background:#232323;"></div>
<svg style="left:1424px;top:602px;" width="16" height="15" viewBox="0 0 16 15"><rect x="2" y="2" width="13" height="10" fill="none" stroke="#d0d0d0" stroke-width="1.3"/><rect x="2" y="12" width="13" height="2" fill="#d0d0d0"/></svg>
<svg style="left:1444px;top:604px;" width="8" height="11" viewBox="0 0 8 11"><path d="M1.5 1.5 L6.5 5.5 L1.5 9.5 Z" fill="none" stroke="#8a8a8a" stroke-width="1"/></svg>
<div style="left:1458px;top:600px;width:31px;height:19px;background:#2c2c2c;border-radius:3px;"></div>
<div style="left:1476px;top:600px;width:1px;height:19px;background:#232323;"></div>
<svg style="left:1459px;top:602px;" width="16" height="15" viewBox="0 0 16 15"><rect x="2" y="2" width="8" height="6" fill="none" stroke="#d0d0d0" stroke-width="1.1"/><path d="M4 10 H12 V5 M6 12 H14 V7" fill="none" stroke="#d0d0d0" stroke-width="1.1"/></svg>
<svg style="left:1479px;top:604px;" width="8" height="11" viewBox="0 0 8 11"><path d="M1.5 1.5 L6.5 5.5 L1.5 9.5 Z" fill="none" stroke="#8a8a8a" stroke-width="1"/></svg>
<div style="left:1493px;top:600px;width:31px;height:19px;background:#2c2c2c;border-radius:3px;"></div>
<div style="left:1511px;top:600px;width:1px;height:19px;background:#232323;"></div>
<svg style="left:1494px;top:602px;" width="16" height="15" viewBox="0 0 16 15"><rect x="2" y="1" width="8" height="8" fill="#b8b8b8"/><rect x="6" y="6" width="8" height="8" fill="#2c2c2c" stroke="#d0d0d0" stroke-width="1.2"/></svg>
<svg style="left:1514px;top:604px;" width="8" height="11" viewBox="0 0 8 11"><path d="M1.5 1.5 L6.5 5.5 L1.5 9.5 Z" fill="none" stroke="#8a8a8a" stroke-width="1"/></svg>
<div style="left:1528px;top:600px;width:31px;height:19px;background:#2c2c2c;border-radius:3px;"></div>
<div style="left:1546px;top:600px;width:1px;height:19px;background:#232323;"></div>
<svg style="left:1529px;top:602px;" width="16" height="15" viewBox="0 0 16 15"><rect x="2" y="1" width="3" height="3" fill="#39c66b"/><rect x="2" y="7" width="3" height="3" fill="#39c66b"/><rect x="5" y="4" width="3" height="3" fill="#39c66b"/><rect x="5" y="10" width="3" height="3" fill="#39c66b"/><rect x="8" y="1" width="3" height="3" fill="#39c66b"/><rect x="8" y="7" width="3" height="3" fill="#39c66b"/><rect x="11" y="4" width="3" height="3" fill="#39c66b"/><rect x="11" y="10" width="3" height="3" fill="#39c66b"/></svg>
<svg style="left:1549px;top:604px;" width="8" height="11" viewBox="0 0 8 11"><path d="M1.5 1.5 L6.5 5.5 L1.5 9.5 Z" fill="none" stroke="#8a8a8a" stroke-width="1"/></svg>
<div style="left:1563px;top:600px;width:20px;height:19px;background:#2c2c2c;border-radius:3px;"></div>
<svg style="left:1565px;top:602px;" width="16" height="15" viewBox="0 0 16 15"><circle cx="8" cy="7.5" r="3.5" fill="none" stroke="#d0d0d0" stroke-width="2.5"/><rect x="7" y="0.5" width="2" height="3" fill="#d0d0d0" transform="rotate(0 8 7.5)"/><rect x="7" y="0.5" width="2" height="3" fill="#d0d0d0" transform="rotate(45 8 7.5)"/><rect x="7" y="0.5" width="2" height="3" fill="#d0d0d0" transform="rotate(90 8 7.5)"/><rect x="7" y="0.5" width="2" height="3" fill="#d0d0d0" transform="rotate(135 8 7.5)"/><rect x="7" y="0.5" width="2" height="3" fill="#d0d0d0" transform="rotate(180 8 7.5)"/><rect x="7" y="0.5" width="2" height="3" fill="#d0d0d0" transform="rotate(225 8 7.5)"/><rect x="7" y="0.5" width="2" height="3" fill="#d0d0d0" transform="rotate(270 8 7.5)"/><rect x="7" y="0.5" width="2" height="3" fill="#d0d0d0" transform="rotate(315 8 7.5)"/></svg>
<div style="left:1587px;top:85px;width:6px;height:544px;background:#121212;"></div>
<div style="left:494px;top:620px;width:1099px;height:6px;background:#121212;"></div>
<div style="left:1593px;top:85px;width:320px;height:22px;background:#1c1c1c;"></div>
<div style="left:1593px;top:85px;width:40px;height:22px;background:#444444;border-radius:4px 4px 0 0;"></div>
<div class="t" id="t72" style="left:1598px;top:88.0px;height:18px;line-height:18px;font-size:13px;color:#e2e2e2;font-family:'Liberation Sans',sans-serif;white-space:nowrap;transform:scaleX(0.9331);transform-origin:0 50%;">Color</div>
<div style="left:1634px;top:85px;width:68px;height:22px;background:#2a2a2a;border-radius:4px 4px 0 0;"></div>
<div class="t" id="t73" style="left:1639px;top:88.0px;height:18px;line-height:18px;font-size:13px;color:#e2e2e2;font-family:'Liberation Sans',sans-serif;white-space:nowrap;transform:scaleX(0.8819);transform-origin:0 50%;">Add Layers</div>
<div style="left:1593px;top:107px;width:307px;height:417px;background:#454545;"></div>
<div style="left:1900px;top:107px;width:14px;height:417px;background:#3b3b3b;"></div>
<div style="left:1902px;top:109px;width:10px;height:367px;background:#555555;border-radius:5px;"></div>
<div style="left:1914px;top:85px;width:6px;height:944px;background:#1e1e1e;"></div>
<div style="left:1646px;top:120px;width:200px;height:200px;border-radius:50%;background:conic-gradient(from 0deg, hsl(90,100%,50%) 0deg, hsl(60,100%,50%) 30deg, hsl(30,100%,50%) 60deg, hsl(0,100%,50%) 90deg, hsl(330,100%,50%) 120deg, hsl(300,100%,50%) 150deg, hsl(270,100%,50%) 180deg, hsl(240,100%,50%) 210deg, hsl(210,100%,50%) 240deg, hsl(180,100%,50%) 270deg, hsl(150,100%,50%) 300deg, hsl(120,100%,50%) 330deg, hsl(90,100%,50%) 360deg);"></div>
<div style="left:1671.5px;top:145.5px;width:149px;height:149px;background:#454545;border-radius:50%;"></div>
<div style="left:1702px;top:176px;width:90px;height:90px;background:linear-gradient(90deg,#000,rgba(0,0,0,0)),linear-gradient(180deg,#fff,#f00);"></div>
<svg style="left:1728px;top:167px;" width="18" height="18" viewBox="0 0 18 18"><circle cx="9" cy="9" r="6" fill="none" stroke="#e8e8e8" stroke-width="1.3"/></svg>
<svg style="left:1824px;top:211px;" width="18" height="18" viewBox="0 0 18 18"><circle cx="9" cy="9" r="6" fill="none" stroke="#f0f0f0" stroke-width="1.3"/></svg>
<div style="left:1600px;top:333px;width:22px;height:21px;background:#646464;border-radius:3px;"></div>
<div class="t" id="t74" style="left:1625px;top:335.5px;height:18px;line-height:18px;font-size:13px;color:#e6e6e6;font-family:'Liberation Sans',sans-serif;white-space:nowrap;transform:scaleX(0.9109);transform-origin:0 50%;">Dim Gray</div>
<div style="left:1871px;top:333px;width:22px;height:22px;background:#2c2c2c;border-radius:3px;box-shadow:inset 0 0 0 1px #252525;"></div>
<svg style="left:1874px;top:336px;" width="16" height="16" viewBox="0 0 16 16"><path d="M3 13 L10 6 M9 4 L12 7" stroke="#d0d0d0" stroke-width="1.6"/><path d="M10 3.5 L12.5 1 L15 3.5 L12.5 6 Z" fill="#d0d0d0"/></svg>
<div style="left:1600px;top:361px;width:50px;height:17px;background:#3a3a3a;border-radius:3px;box-shadow:inset 0 0 0 1px #2c2c2c;"></div>
<div class="t" id="t75" style="left:1603px;top:361.0px;height:18px;line-height:18px;font-size:13px;color:#e6e6e6;font-family:'Liberation Sans',sans-serif;white-space:nowrap;transform:scaleX(0.9081);transform-origin:0 50%;">Hex</div>
<svg style="left:1636px;top:364px;" width="12" height="10" viewBox="0 0 12 10"><path d="M2 3 L6 7 L10 3" fill="none" stroke="#c8c8c8" stroke-width="1"/></svg>
<div style="left:1653px;top:358px;width:240px;height:22px;background:#2b2b2b;border-radius:2px;"></div>
<div class="t" id="t76" style="left:1659px;top:362.0px;height:16px;line-height:16px;font-size:12px;color:#555;font-family:'Liberation Sans',sans-serif;white-space:nowrap;transform:scaleX(1.0467);transform-origin:0 50%;">#</div>
<div class="t" id="t77" style="left:1670px;top:361.0px;height:18px;line-height:18px;font-size:13px;color:#e6e6e6;font-family:'Liberation Sans',sans-serif;white-space:nowrap;transform:scaleX(0.9680);transform-origin:0 50%;">646464</div>
<div style="left:1600px;top:390px;width:234px;height:5px;background:#e6e6e6;border-radius:3px;"></div>
<svg style="left:1827px;top:385px;" width="14" height="14" viewBox="0 0 14 14"><circle cx="7" cy="7" r="5.5" fill="#6fc2aa"/><circle cx="7" cy="7" r="2.5" fill="#8ad6c0"/></svg>
<div style="left:1849px;top:384px;width:44px;height:17px;background:#2b2b2b;border-radius:2px;"></div>
<div class="t" id="t78" style="left:1853px;top:385.0px;height:16px;line-height:16px;font-size:12px;color:#555;font-family:'Liberation Sans',sans-serif;white-space:nowrap;transform:scaleX(0.9981);transform-origin:0 50%;">A</div>
<div class="t" id="t79" style="left:1865px;top:384.0px;height:18px;line-height:18px;font-size:13px;color:#e6e6e6;font-family:'Liberation Sans',sans-serif;white-space:nowrap;transform:scaleX(0.9676);transform-origin:0 50%;">255</div>
<div style="left:1597px;top:406px;width:299px;height:22px;background:#262626;"></div>
<div style="left:1599px;top:408px;width:148px;height:20px;background:#444444;border-radius:4px 4px 0 0;"></div>
<div class="t" id="t80" style="left:1648px;top:409.5px;height:18px;line-height:18px;font-size:13px;color:#e6e6e6;font-family:'Liberation Sans',sans-serif;white-space:nowrap;transform:scaleX(0.8869);transform-origin:0 50%;">Swatches</div>
<div class="t" id="t81" style="left:1793px;top:409.5px;height:18px;line-height:18px;font-size:13px;color:#bdbdbd;font-family:'Liberation Sans',sans-serif;white-space:nowrap;transform:scaleX(0.9394);transform-origin:0 50%;">Generator</div>
<div style="left:1598px;top:431px;width:257px;height:18px;background:#535353;border-radius:3px;"></div>
<div style="left:1599px;top:432px;width:62px;height:16px;background:#262626;border-radius:3px;"></div>
<svg style="left:1604px;top:433px;" width="13" height="14" viewBox="0 0 13 14"><path d="M2 2 V12 M5 2 V12 M8 2 L11 12" stroke="#3ec46d" stroke-width="1.6"/></svg>
<div class="t" id="t82" style="left:1621px;top:432.0px;height:18px;line-height:18px;font-size:13px;color:#e6e6e6;font-family:'Liberation Sans',sans-serif;white-space:nowrap;transform:scaleX(0.9308);transform-origin:0 50%;">Library</div>
<svg style="left:1669px;top:434px;" width="13" height="12" viewBox="0 0 13 12"><path d="M1 2 H5 L6 3 H12 V11 H1 Z" fill="none" stroke="#d0d0d0" stroke-width="1.2"/><path d="M3 6 H10 M3 8.5 H10" stroke="#d0d0d0" stroke-width="1"/></svg>
<div class="t" id="t83" style="left:1686px;top:432.0px;height:18px;line-height:18px;font-size:13px;color:#e6e6e6;font-family:'Liberation Sans',sans-serif;white-space:nowrap;transform:scaleX(0.9390);transform-origin:0 50%;">Project</div>
<svg style="left:1737px;top:433px;" width="11" height="14" viewBox="0 0 11 14"><path d="M1.5 1.5 H6.5 L9.5 4.5 V12.5 H1.5 Z" fill="none" stroke="#d0d0d0" stroke-width="1.1"/></svg>
<div class="t" id="t84" style="left:1752px;top:432.0px;height:18px;line-height:18px;font-size:13px;color:#e6e6e6;font-family:'Liberation Sans',sans-serif;white-space:nowrap;transform:scaleX(0.8407);transform-origin:0 50%;">Scene</div>
<svg style="left:1799px;top:433px;" width="13" height="14" viewBox="0 0 13 14"><path d="M6 1.5 H11.5 V8 L7 12.5 H6 A5 5 0 0 1 6 1.5 Z" fill="none" stroke="#d0d0d0" stroke-width="1.1"/></svg>
<div class="t" id="t85" style="left:1816px;top:432.0px;height:18px;line-height:18px;font-size:13px;color:#e6e6e6;font-family:'Liberation Sans',sans-serif;white-space:nowrap;transform:scaleX(0.8613);transform-origin:0 50%;">Labels</div>
<div style="left:1858px;top:432px;width:17px;height:17px;background:#262626;border-radius:3px;"></div>
<svg style="left:1858px;top:432px;" width="17" height="17" viewBox="0 0 17 17"><rect x="4" y="4" width="3.5" height="3.5" fill="#3ec46d"/><rect x="9.5" y="4" width="3.5" height="3.5" fill="#3ec46d"/><rect x="4" y="9.5" width="3.5" height="3.5" fill="#3ec46d"/><rect x="9.5" y="9.5" width="3.5" height="3.5" fill="#3ec46d"/></svg>
<div style="left:1877px;top:432px;width:18px;height:17px;background:#535353;border-radius:3px;"></div>
<svg style="left:1877px;top:432px;" width="18" height="17" viewBox="0 0 18 17"><path d="M4 5 H14 M4 8.5 H14 M4 12 H14" stroke="#d0d0d0" stroke-width="1.1"/></svg>
<div style="left:1598px;top:453px;width:275px;height:16px;background:#545454;border-radius:3px;"></div>
<div class="t" id="t86" style="left:1601px;top:452.5px;height:18px;line-height:18px;font-size:13px;color:#e6e6e6;font-family:'Liberation Sans',sans-serif;white-space:nowrap;transform:scaleX(0.8805);transform-origin:0 50%;">Simple</div>
<svg style="left:1859px;top:456px;" width="12" height="10" viewBox="0 0 12 10"><path d="M2 3 L6 7 L10 3" fill="none" stroke="#c8c8c8" stroke-width="1"/></svg>
<div style="left:1881px;top:460px;width:2px;height:2px;background:#cfcfcf;"></div>
<div style="left:1886px;top:460px;width:2px;height:2px;background:#cfcfcf;"></div>
<div style="left:1891px;top:460px;width:2px;height:2px;background:#cfcfcf;"></div>
<div style="left:1598px;top:469px;width:297px;height:55px;background:#262626;"></div>
<div style="left:1600px;top:472px;width:18px;height:18px;background:#0a6fc2;border-radius:3px;"></div>
<div style="left:1622px;top:472px;width:18px;height:18px;background:#15a0e0;border-radius:3px;"></div>
<div style="left:1644px;top:472px;width:18px;height:18px;background:#8fc35c;border-radius:3px;"></div>
<div style="left:1666px;top:472px;width:18px;height:18px;background:#f4e049;border-radius:3px;"></div>
<div style="left:1688px;top:472px;width:18px;height:18px;background:#ef7214;border-radius:3px;"></div>
<div style="left:1593px;top:524px;width:320px;height:6px;background:#121212;"></div>
<div style="left:1593px;top:530px;width:320px;height:22px;background:#1c1c1c;"></div>
<div style="left:1593px;top:530px;width:38px;height:22px;background:#444444;border-radius:4px 4px 0 0;"></div>
<div class="t" id="t87" style="left:1598px;top:532.5px;height:18px;line-height:18px;font-size:13px;color:#e2e2e2;font-family:'Liberation Sans',sans-serif;white-space:nowrap;transform:scaleX(0.9335);transform-origin:0 50%;">Align</div>
<div style="left:1593px;top:552px;width:321px;height:68px;background:#454545;"></div>
<div class="t" id="t88" style="left:1601px;top:563.1px;height:18px;line-height:18px;font-size:13px;color:#e6e6e6;font-family:'Liberation Sans',sans-serif;white-space:nowrap;transform:scaleX(0.9341);transform-origin:0 50%;">Alignment</div>
<div class="t" id="t89" style="left:1601px;top:591.1px;height:18px;line-height:18px;font-size:13px;color:#e6e6e6;font-family:'Liberation Sans',sans-serif;white-space:nowrap;transform:scaleX(0.9841);transform-origin:0 50%;">Distribution</div>
<div style="left:1790px;top:563px;width:54px;height:17px;background:#262626;border-radius:3px;"></div>
<svg style="left:1790px;top:563px;" width="18" height="17" viewBox="0 0 18 17"><path d="M4 3 V14" stroke="#dcdcdc" stroke-width="1.2"/><path d="M6 6 H11 M6 11 H14" stroke="#dcdcdc" stroke-width="2"/></svg>
<div style="left:1808px;top:563px;width:1px;height:17px;background:#3a3a3a;"></div>
<svg style="left:1808px;top:563px;" width="18" height="17" viewBox="0 0 18 17"><path d="M9 3 V14" stroke="#dcdcdc" stroke-width="1.2"/><path d="M5 6 H13 M4 11 H14" stroke="#dcdcdc" stroke-width="2"/></svg>
<div style="left:1826px;top:563px;width:1px;height:17px;background:#3a3a3a;"></div>
<svg style="left:1826px;top:563px;" width="18" height="17" viewBox="0 0 18 17"><path d="M14 3 V14" stroke="#dcdcdc" stroke-width="1.2"/><path d="M7 6 H12 M4 11 H12" stroke="#dcdcdc" stroke-width="2"/></svg>
<div style="left:1852px;top:563px;width:54px;height:17px;background:#262626;border-radius:3px;"></div>
<svg style="left:1852px;top:563px;" width="18" height="17" viewBox="0 0 18 17"><path d="M3 3 H15" stroke="#dcdcdc" stroke-width="1.2"/><path d="M6 5 V14 M11 5 V10" stroke="#dcdcdc" stroke-width="2"/></svg>
<div style="left:1870px;top:563px;width:1px;height:17px;background:#3a3a3a;"></div>
<svg style="left:1870px;top:563px;" width="18" height="17" viewBox="0 0 18 17"><path d="M3 8.5 H15" stroke="#dcdcdc" stroke-width="1.2"/><path d="M6 4 V13 M11 5 V12" stroke="#dcdcdc" stroke-width="2"/></svg>
<div style="left:1888px;top:563px;width:1px;height:17px;background:#3a3a3a;"></div>
<svg style="left:1888px;top:563px;" width="18" height="17" viewBox="0 0 18 17"><path d="M3 14 H15" stroke="#dcdcdc" stroke-width="1.2"/><path d="M6 8 V12 M11 4 V12" stroke="#dcdcdc" stroke-width="2"/></svg>
<div style="left:1790px;top:591px;width:54px;height:17px;background:#262626;border-radius:3px;"></div>
<svg style="left:1790px;top:591px;" width="18" height="17" viewBox="0 0 18 17"><path d="M4 3 V14 M14 3 V14" stroke="#dcdcdc" stroke-width="1.2"/><path d="M9 5 V12" stroke="#dcdcdc" stroke-width="2"/></svg>
<div style="left:1808px;top:591px;width:1px;height:17px;background:#3a3a3a;"></div>
<svg style="left:1808px;top:591px;" width="18" height="17" viewBox="0 0 18 17"><path d="M3 4 H15 M3 13 H15" stroke="#dcdcdc" stroke-width="1.2"/><path d="M5 8.5 H13" stroke="#dcdcdc" stroke-width="2"/></svg>
<div style="left:1826px;top:591px;width:1px;height:17px;background:#3a3a3a;"></div>
<svg style="left:1826px;top:591px;" width="18" height="17" viewBox="0 0 18 17"><path d="M3 14 V10 M15 3 V7" stroke="#dcdcdc" stroke-width="1.2"/><path d="M6 11 V13 M10 8 V10 M13 5 V7" stroke="#dcdcdc" stroke-width="2"/></svg>
<div style="left:1593px;top:620px;width:320px;height:6px;background:#121212;"></div>
<div style="left:494px;top:626px;width:1419px;height:22px;background:#1c1c1c;"></div>
<div style="left:494px;top:626px;width:89px;height:22px;background:#444444;border-radius:4px 4px 0 0;"></div>
<div class="t" id="t90" style="left:499.8px;top:629.2px;height:18px;line-height:18px;font-size:13px;color:#e6e6e6;font-family:'Liberation Sans',sans-serif;white-space:nowrap;transform:scaleX(0.8879);transform-origin:0 50%;">Scene Window</div>
<div style="left:584px;top:626px;width:100px;height:22px;background:#2c2c2c;border-radius:4px 4px 0 0;"></div>
<div class="t" id="t91" style="left:590px;top:629.2px;height:18px;line-height:18px;font-size:13px;color:#e6e6e6;font-family:'Liberation Sans',sans-serif;white-space:nowrap;transform:scaleX(0.8955);transform-origin:0 50%;">JavaScript Editor</div>
<div style="left:685px;top:626px;width:111px;height:22px;background:#2c2c2c;border-radius:4px 4px 0 0;"></div>
<div class="t" id="t92" style="left:690px;top:629.2px;height:18px;line-height:18px;font-size:13px;color:#e6e6e6;font-family:'Liberation Sans',sans-serif;white-space:nowrap;transform:scaleX(0.9002);transform-origin:0 50%;">Dependency Graph</div>
<div style="left:494px;top:648px;width:1419px;height:22px;background:#262626;"></div>
<div class="t" id="t93" style="left:591px;top:650.5px;height:18px;line-height:18px;font-size:13px;color:#aeb8c8;font-family:'Liberation Sans',sans-serif;white-space:nowrap;transform:scaleX(0.9145);transform-origin:0 50%;">Composition 1</div>
<svg style="left:763px;top:654px;" width="10" height="10" viewBox="0 0 10 10"><path d="M1 1 L9 9 M9 1 L1 9" stroke="#9a9a9a" stroke-width="1.1"/></svg>
<div style="left:781px;top:653px;width:1px;height:12px;background:#888;"></div>
<div class="t" id="t94" style="left:841.5px;top:650.5px;height:18px;line-height:18px;font-size:13px;color:#aeb8c8;font-family:'Liberation Sans',sans-serif;white-space:nowrap;transform:scaleX(0.9137);transform-origin:0 50%;">background grid animation</div>
<svg style="left:1045px;top:654px;" width="10" height="10" viewBox="0 0 10 10"><path d="M1 1 L9 9 M9 1 L1 9" stroke="#9a9a9a" stroke-width="1.1"/></svg>
<div style="left:1063px;top:653px;width:1px;height:12px;background:#888;"></div>
<div class="t" id="t95" style="left:1118.8px;top:650.5px;height:18px;line-height:18px;font-size:13px;color:#aeb8c8;font-family:'Liberation Sans',sans-serif;white-space:nowrap;transform:scaleX(0.9082);transform-origin:0 50%;">background grid animation 1</div>
<svg style="left:1326.5px;top:654px;" width="10" height="10" viewBox="0 0 10 10"><path d="M1 1 L9 9 M9 1 L1 9" stroke="#9a9a9a" stroke-width="1.1"/></svg>
<div style="left:1345.5px;top:653px;width:1px;height:12px;background:#888;"></div>
<div class="t" id="t96" style="left:1401px;top:650.5px;height:18px;line-height:18px;font-size:13px;color:#aeb8c8;font-family:'Liberation Sans',sans-serif;white-space:nowrap;transform:scaleX(0.9082);transform-origin:0 50%;">background grid animation 2</div>
<svg style="left:1608.5px;top:654px;" width="10" height="10" viewBox="0 0 10 10"><path d="M1 1 L9 9 M9 1 L1 9" stroke="#9a9a9a" stroke-width="1.1"/></svg>
<div style="left:1627px;top:650px;width:282px;height:20px;background:#444444;border-radius:4px 4px 0 0;"></div>
<div class="t" id="t97" style="left:1714.7px;top:650.5px;height:18px;line-height:18px;font-size:13px;color:#e8e8e8;font-family:'Liberation Sans',sans-serif;white-space:nowrap;transform:scaleX(0.9314);transform-origin:0 50%;">duplicator blend</div>
<svg style="left:1891px;top:654px;" width="10" height="10" viewBox="0 0 10 10"><path d="M1 1 L9 9 M9 1 L1 9" stroke="#bbb" stroke-width="1.1"/></svg>
<div style="left:494px;top:712px;width:511px;height:251px;background:#383838;"></div>
<div style="left:1005px;top:712px;width:18px;height:251px;background:#2a2a2a;"></div>
<div style="left:1007px;top:764px;width:10px;height:156px;background:#4e4e4e;border-radius:5px;"></div>
<svg style="left:653px;top:714px;" width="9" height="2" viewBox="0 0 9 2"><path d="M0 1 H9" stroke="#c8c8c8" stroke-width="1" stroke-dasharray="1 1"/></svg>
<div class="t" id="t98" style="left:666px;top:707.1px;height:18px;line-height:18px;font-size:13px;color:#e6e6e6;font-family:'Liberation Sans',sans-serif;white-space:nowrap;transform:scaleX(0.9358);transform-origin:0 50%;">Strength</div>
<div style="left:907px;top:707.5px;width:84px;height:16px;background:#2b2b2b;border-radius:2px 0 0 2px;"></div>
<div style="left:991px;top:707.5px;width:10px;height:16px;background:#303030;border-radius:0 2px 2px 0;"></div>
<div class="t" id="t99" style="left:911px;top:708.0px;height:16px;line-height:16px;font-size:12px;color:#6a6a6a;font-family:'Liberation Sans',sans-serif;white-space:nowrap;transform:scaleX(0.7496);transform-origin:0 50%;">%</div>
<div class="t" id="t100" style="left:924px;top:707.0px;height:18px;line-height:18px;font-size:13px;color:#e6e6e6;font-family:'Liberation Sans',sans-serif;white-space:nowrap;transform:scaleX(0.9086);transform-origin:0 50%;">67.0</div>
<svg style="left:978px;top:710.5px;" width="10" height="10" viewBox="0 0 10 10"><path d="M5 1 L9 5 L5 9 L1 5 Z" fill="#d0d0d0"/></svg>
<svg style="left:993px;top:710.5px;" width="8" height="10" viewBox="0 0 8 10"><path d="M1 1 L7 5 L1 9 Z" fill="#777"/></svg>
<div style="left:496px;top:728px;width:17.5px;height:18px;background:#2c2c2c;border-radius:3px;"></div>
<div style="left:515px;top:728px;width:17.5px;height:18px;background:#2c2c2c;border-radius:3px;"></div>
<svg style="left:516px;top:731px;" width="15" height="12" viewBox="0 0 15 12"><ellipse cx="7.5" cy="6" rx="6" ry="3.8" fill="none" stroke="#4a4a4a" stroke-width="1.2"/><circle cx="7.5" cy="6" r="2" fill="#4a4a4a"/></svg>
<div style="left:534.5px;top:728px;width:17.5px;height:18px;background:#2c2c2c;border-radius:3px;"></div>
<div style="left:573px;top:729px;width:16px;height:16px;background:#fde47a;border-radius:2px;"></div>
<svg style="left:593px;top:732px;" width="15" height="10" viewBox="0 0 15 10"><path d="M4 1 H14 V9 H4 L0.5 5 Z" fill="#d0d0d0"/><circle cx="5" cy="5" r="1.6" fill="#383838"/></svg>
<div style="left:629px;top:728px;width:15px;height:18px;background:#323232;border-radius:3px;"></div>
<svg style="left:629px;top:728px;" width="15" height="18" viewBox="0 0 15 18"><path d="M3.5 7 L7.5 11 L11.5 7" fill="none" stroke="#9a9a9a" stroke-width="1"/></svg>
<div style="left:645px;top:728px;width:15px;height:18px;background:#2e2e2e;border-radius:3px;"></div>
<svg style="left:645px;top:728px;" width="15" height="18" viewBox="0 0 15 18"><circle cx="7.5" cy="9" r="3.2" fill="#d8d8d8"/></svg>
<svg style="left:666px;top:730px;" width="15" height="14" viewBox="0 0 15 14"><rect x="1" y="1" width="2.2" height="2.2" fill="#e5d36a"/><rect x="1" y="6" width="2.2" height="2.2" fill="#e5d36a"/><rect x="1" y="11" width="2.2" height="2.2" fill="#e5d36a"/><rect x="6" y="1" width="2.2" height="2.2" fill="#e5d36a"/><rect x="6" y="6" width="2.2" height="2.2" fill="#e5d36a"/><rect x="6" y="11" width="2.2" height="2.2" fill="#e5d36a"/><rect x="11" y="1" width="2.2" height="2.2" fill="#e5d36a"/><rect x="11" y="6" width="2.2" height="2.2" fill="#e5d36a"/><rect x="11" y="11" width="2.2" height="2.2" fill="#e5d36a"/></svg>
<div class="t" id="t101" style="left:686px;top:728.5px;height:18px;line-height:18px;font-size:13px;color:#aeb8c8;font-family:'Liberation Sans',sans-serif;white-space:nowrap;transform:scaleX(0.9507);transform-origin:0 50%;">GridDuplicator</div>
<div style="left:965.5px;top:729px;width:20.5px;height:16px;background:#2c2c2c;border-radius:3px;"></div>
<div style="left:975.5px;top:729px;width:0.8px;height:16px;background:#262626;"></div>
<svg style="left:965px;top:728px;" width="22" height="18" viewBox="0 0 22 18"><path d="M2.5 9 L4.5 6 L8 6 L8 12 L4.5 12 Z" fill="#d6c070"/><path d="M13 6 L16.5 6 L18.5 9 L16.5 12 L13 12 Z" fill="#c864dc"/><rect x="11.5" y="1.5" width="9.5" height="15" rx="1" fill="none" stroke="#8a4fa0" stroke-width="1"/></svg>
<svg style="left:990px;top:731px;" width="12" height="12" viewBox="0 0 12 12"><circle cx="6" cy="6" r="4.4" fill="none" stroke="#707070" stroke-width="1.3"/></svg>
<svg style="left:652px;top:748px;" width="2" height="33" viewBox="0 0 2 33"><path d="M1 0 V33" stroke="#c8c8c8" stroke-width="1" stroke-dasharray="1 1"/></svg>
<svg style="left:653px;top:758px;" width="9" height="2" viewBox="0 0 9 2"><path d="M0 1 H9" stroke="#c8c8c8" stroke-width="1" stroke-dasharray="1 1"/></svg>
<svg style="left:653px;top:780px;" width="9" height="2" viewBox="0 0 9 2"><path d="M0 1 H9" stroke="#c8c8c8" stroke-width="1" stroke-dasharray="1 1"/></svg>
<div class="t" id="t102" style="left:666px;top:750.5px;height:18px;line-height:18px;font-size:13px;color:#e6e6e6;font-family:'Liberation Sans',sans-serif;white-space:nowrap;transform:scaleX(0.8801);transform-origin:0 50%;">Grid.Size.H</div>
<div style="left:907px;top:751px;width:84px;height:16px;background:#2b2b2b;border-radius:2px 0 0 2px;"></div>
<div style="left:991px;top:751px;width:10px;height:16px;background:#303030;border-radius:0 2px 2px 0;"></div>
<div class="t" id="t103" style="left:911px;top:750.5px;height:18px;line-height:18px;font-size:13px;color:#6a6a6a;font-family:'Liberation Sans',sans-serif;white-space:nowrap;transform:scaleX(0.8519);transform-origin:0 50%;">H</div>
<div class="t" id="t104" style="left:924px;top:750.5px;height:18px;line-height:18px;font-size:13px;color:#e6e6e6;font-family:'Liberation Sans',sans-serif;white-space:nowrap;transform:scaleX(0.9217);transform-origin:0 50%;">580.0</div>
<svg style="left:978px;top:754px;" width="10" height="10" viewBox="0 0 10 10"><path d="M5 1 L9 5 L5 9 L1 5 Z" fill="#d0d0d0"/></svg>
<svg style="left:993px;top:754px;" width="8" height="10" viewBox="0 0 8 10"><path d="M1 1 L7 5 L1 9 Z" fill="#777"/></svg>
<div class="t" id="t105" style="left:666px;top:772.5px;height:18px;line-height:18px;font-size:13px;color:#e6e6e6;font-family:'Liberation Sans',sans-serif;white-space:nowrap;transform:scaleX(0.8797);transform-origin:0 50%;">Grid.Size.W</div>
<div style="left:907px;top:773px;width:84px;height:16px;background:#2b2b2b;border-radius:2px 0 0 2px;"></div>
<div style="left:991px;top:773px;width:10px;height:16px;background:#303030;border-radius:0 2px 2px 0;"></div>
<div class="t" id="t106" style="left:911px;top:772.5px;height:18px;line-height:18px;font-size:13px;color:#6a6a6a;font-family:'Liberation Sans',sans-serif;white-space:nowrap;transform:scaleX(0.8142);transform-origin:0 50%;">W</div>
<div class="t" id="t107" style="left:924px;top:772.5px;height:18px;line-height:18px;font-size:13px;color:#e6e6e6;font-family:'Liberation Sans',sans-serif;white-space:nowrap;transform:scaleX(0.9217);transform-origin:0 50%;">580.0</div>
<svg style="left:978px;top:776px;" width="10" height="10" viewBox="0 0 10 10"><path d="M5 1 L9 5 L5 9 L1 5 Z" fill="#d0d0d0"/></svg>
<svg style="left:993px;top:776px;" width="8" height="10" viewBox="0 0 8 10"><path d="M1 1 L7 5 L1 9 Z" fill="#777"/></svg>
<div style="left:496px;top:794px;width:17.5px;height:18px;background:#2c2c2c;border-radius:3px;"></div>
<div style="left:515px;top:794px;width:17.5px;height:18px;background:#2c2c2c;border-radius:3px;"></div>
<div style="left:534.5px;top:794px;width:17.5px;height:18px;background:#2c2c2c;border-radius:3px;"></div>
<div style="left:573px;top:795px;width:16px;height:16px;background:#fde47a;border-radius:2px;"></div>
<svg style="left:593px;top:798px;" width="15" height="10" viewBox="0 0 15 10"><path d="M4 1 H14 V9 H4 L0.5 5 Z" fill="#d0d0d0"/><circle cx="5" cy="5" r="1.6" fill="#383838"/></svg>
<svg style="left:666px;top:796px;" width="15" height="14" viewBox="0 0 15 14"><rect x="2" y="2" width="11" height="10" fill="none" stroke="#e5d36a" stroke-width="1.3" stroke-dasharray="3 2"/></svg>
<div class="t" id="t108" style="left:686px;top:794.5px;height:18px;line-height:18px;font-size:13px;color:#aeb8c8;font-family:'Liberation Sans',sans-serif;white-space:nowrap;transform:scaleX(0.8893);transform-origin:0 50%;">inputShape</div>
<div style="left:965.5px;top:795px;width:20.5px;height:16px;background:#2c2c2c;border-radius:3px;"></div>
<div style="left:975.5px;top:795px;width:0.8px;height:16px;background:#262626;"></div>
<svg style="left:965px;top:794px;" width="22" height="18" viewBox="0 0 22 18"><path d="M2.5 9 L4.5 6 L8 6 L8 12 L4.5 12 Z" fill="#d6c070"/><path d="M13 6 L16.5 6 L18.5 9 L16.5 12 L13 12 Z" fill="#c864dc"/></svg>
<svg style="left:990px;top:797px;" width="12" height="12" viewBox="0 0 12 12"><circle cx="6" cy="6" r="4.4" fill="none" stroke="#707070" stroke-width="1.3"/></svg>
<div style="left:496px;top:816px;width:17.5px;height:18px;background:#2c2c2c;border-radius:3px;"></div>
<div style="left:515px;top:816px;width:17.5px;height:18px;background:#2c2c2c;border-radius:3px;"></div>
<svg style="left:516px;top:817px;" width="16" height="16" viewBox="0 0 16 16"><path d="M12.5 6 A5 5 0 1 1 10 3.8" fill="none" stroke="#d8d8d8" stroke-width="1.3"/><path d="M5.5 8 L8 10.5 L13 4.5" fill="none" stroke="#d8d8d8" stroke-width="1.5"/></svg>
<div style="left:573px;top:817px;width:16px;height:16px;background:#c9ec7e;border-radius:2px;"></div>
<svg style="left:593px;top:820px;" width="15" height="10" viewBox="0 0 15 10"><path d="M4 1 H14 V9 H4 L0.5 5 Z" fill="#d0d0d0"/><circle cx="5" cy="5" r="1.6" fill="#383838"/></svg>
<div style="left:611px;top:816px;width:16px;height:18px;background:#323232;border-radius:3px;"></div>
<svg style="left:611px;top:816px;" width="16" height="18" viewBox="0 0 16 18"><path d="M4.0 7 L8.0 11 L12.0 7" fill="none" stroke="#666" stroke-width="1"/></svg>
<div style="left:627px;top:816px;width:15px;height:18px;background:#2e2e2e;border-radius:3px;"></div>
<svg style="left:627px;top:816px;" width="15" height="18" viewBox="0 0 15 18"><circle cx="7.5" cy="9" r="3.2" fill="#d8d8d8"/></svg>
<svg style="left:647px;top:818px;" width="16" height="14" viewBox="0 0 16 14"><g fill="#8fd86f"><rect x="1" y="1" width="2" height="2"/><rect x="1" y="6" width="2" height="2"/><rect x="13" y="1" width="2" height="2"/><rect x="13" y="6" width="2" height="2"/></g><g fill="#ddd"><rect x="1" y="11" width="2" height="2"/><rect x="13" y="11" width="2" height="2"/></g><path d="M5 1 L10 6 M10 1 L5 6" stroke="#ddd" stroke-width="1"/><rect x="5" y="11" width="6" height="1.5" fill="#aaa"/></svg>
<div class="t" id="t109" style="left:667.7px;top:816.5px;height:18px;line-height:18px;font-size:13px;color:#e6e6e6;font-family:'Liberation Sans',sans-serif;white-space:nowrap;transform:scaleX(0.9323);transform-origin:0 50%;">1to2 &amp; 4to1</div>
<div style="left:965.5px;top:817px;width:20.5px;height:16px;background:#2c2c2c;border-radius:3px;"></div>
<div style="left:975.5px;top:817px;width:0.8px;height:16px;background:#262626;"></div>
<svg style="left:965px;top:816px;" width="22" height="18" viewBox="0 0 22 18"><path d="M2.5 9 L4.5 6 L8 6 L8 12 L4.5 12 Z" fill="#d6c070"/><path d="M13 6 L16.5 6 L18.5 9 L16.5 12 L13 12 Z" fill="#c864dc"/></svg>
<svg style="left:990px;top:819px;" width="12" height="12" viewBox="0 0 12 12"><circle cx="6" cy="6" r="4.4" fill="none" stroke="#707070" stroke-width="1.3"/></svg>
<svg style="left:634px;top:836px;" width="2" height="11" viewBox="0 0 2 11"><path d="M1 0 V11" stroke="#c8c8c8" stroke-width="1" stroke-dasharray="1 1"/></svg>
<svg style="left:635px;top:846px;" width="10" height="2" viewBox="0 0 10 2"><path d="M0 1 H10" stroke="#c8c8c8" stroke-width="1" stroke-dasharray="1 1"/></svg>
<div class="t" id="t110" style="left:648px;top:838.5px;height:18px;line-height:18px;font-size:13px;color:#e6e6e6;font-family:'Liberation Sans',sans-serif;white-space:nowrap;transform:scaleX(0.8722);transform-origin:0 50%;">Blend</div>
<div style="left:907px;top:839px;width:84px;height:16px;background:#2b2b2b;border-radius:2px 0 0 2px;"></div>
<div style="left:991px;top:839px;width:10px;height:16px;background:#303030;border-radius:0 2px 2px 0;"></div>
<div class="t" id="t111" style="left:911px;top:839.5px;height:16px;line-height:16px;font-size:12px;color:#6a6a6a;font-family:'Liberation Sans',sans-serif;white-space:nowrap;transform:scaleX(0.7496);transform-origin:0 50%;">%</div>
<div class="t" id="t112" style="left:924px;top:838.5px;height:18px;line-height:18px;font-size:13px;color:#e6e6e6;font-family:'Liberation Sans',sans-serif;white-space:nowrap;transform:scaleX(0.9217);transform-origin:0 50%;">100.0</div>
<svg style="left:978px;top:842px;" width="10" height="10" viewBox="0 0 10 10"><path d="M5 1 L9 5 L5 9 L1 5 Z" fill="#d0d0d0"/></svg>
<svg style="left:993px;top:842px;" width="8" height="10" viewBox="0 0 8 10"><path d="M1 1 L7 5 L1 9 Z" fill="#777"/></svg>
<div style="left:496px;top:860px;width:17.5px;height:18px;background:#2c2c2c;border-radius:3px;"></div>
<div style="left:515px;top:860px;width:17.5px;height:18px;background:#2c2c2c;border-radius:3px;"></div>
<svg style="left:516px;top:863px;" width="15" height="12" viewBox="0 0 15 12"><ellipse cx="7.5" cy="6" rx="6" ry="3.8" fill="none" stroke="#d8d8d8" stroke-width="1.2"/><circle cx="7.5" cy="6" r="2" fill="#d8d8d8"/></svg>
<div style="left:534.5px;top:860px;width:17.5px;height:18px;background:#2c2c2c;border-radius:3px;"></div>
<div style="left:573px;top:861px;width:16px;height:16px;background:#c8c8c8;border-radius:2px;"></div>
<svg style="left:593px;top:864px;" width="15" height="10" viewBox="0 0 15 10"><path d="M4 1 H14 V9 H4 L0.5 5 Z" fill="#d0d0d0"/><circle cx="5" cy="5" r="1.6" fill="#383838"/></svg>
<div style="left:611px;top:860px;width:17px;height:18px;background:#323232;border-radius:3px;"></div>
<svg style="left:611px;top:860px;" width="17" height="18" viewBox="0 0 17 18"><path d="M4.5 7 L8.5 11 L12.5 7" fill="none" stroke="#888" stroke-width="1"/></svg>
<div style="left:628px;top:860px;width:14px;height:18px;background:#323232;border-radius:3px;"></div>
<svg style="left:647px;top:862px;" width="15" height="14" viewBox="0 0 15 14"><path d="M1 2 H6 L7.5 4 H14 V13 H1 Z" fill="#d8d8d8"/></svg>
<div class="t" id="t113" style="left:667.7px;top:860.5px;height:18px;line-height:18px;font-size:13px;color:#e6e6e6;font-family:'Liberation Sans',sans-serif;white-space:nowrap;transform:scaleX(0.8294);transform-origin:0 50%;">1</div>
<svg style="left:990px;top:863px;" width="12" height="12" viewBox="0 0 12 12"><circle cx="6" cy="6" r="4.4" fill="none" stroke="#707070" stroke-width="1.3"/></svg>
<div style="left:496px;top:882px;width:17.5px;height:18px;background:#2c2c2c;border-radius:3px;"></div>
<div style="left:515px;top:882px;width:17.5px;height:18px;background:#2c2c2c;border-radius:3px;"></div>
<svg style="left:516px;top:883px;" width="16" height="16" viewBox="0 0 16 16"><path d="M12.5 6 A5 5 0 1 1 10 3.8" fill="none" stroke="#d8d8d8" stroke-width="1.3"/><path d="M5.5 8 L8 10.5 L13 4.5" fill="none" stroke="#d8d8d8" stroke-width="1.5"/></svg>
<div style="left:573px;top:883px;width:16px;height:16px;background:#5fd99a;border-radius:2px;"></div>
<svg style="left:593px;top:886px;" width="15" height="10" viewBox="0 0 15 10"><path d="M4 1 H14 V9 H4 L0.5 5 Z" fill="#d0d0d0"/><circle cx="5" cy="5" r="1.6" fill="#383838"/></svg>
<svg style="left:666px;top:883px;" width="16" height="16" viewBox="0 0 16 16"><rect x="1" y="7" width="8" height="8" fill="#8cc8f0"/><rect x="5" y="4" width="8" height="6" fill="none" stroke="#ddd" stroke-width="1"/><path d="M9 1.5 H15 M9 4 H15 M11 6.5 H15" stroke="#ddd" stroke-width="1"/></svg>
<div class="t" id="t114" style="left:686px;top:882.5px;height:18px;line-height:18px;font-size:13px;color:#e6e6e6;font-family:'Liberation Sans',sans-serif;white-space:nowrap;transform:scaleX(0.9380);transform-origin:0 50%;">Color Array</div>
<div style="left:965.5px;top:883px;width:20.5px;height:16px;background:#2c2c2c;border-radius:3px;"></div>
<div style="left:975.5px;top:883px;width:0.8px;height:16px;background:#262626;"></div>
<svg style="left:965px;top:882px;" width="22" height="18" viewBox="0 0 22 18"><path d="M2.5 9 L4.5 6 L8 6 L8 12 L4.5 12 Z" fill="#777"/><path d="M13 6 L16.5 6 L18.5 9 L16.5 12 L13 12 Z" fill="#c864dc"/></svg>
<svg style="left:990px;top:885px;" width="12" height="12" viewBox="0 0 12 12"><circle cx="6" cy="6" r="4.4" fill="none" stroke="#707070" stroke-width="1.3"/></svg>
<div style="left:496px;top:904px;width:17.5px;height:18px;background:#2c2c2c;border-radius:3px;"></div>
<div style="left:515px;top:904px;width:17.5px;height:18px;background:#2c2c2c;border-radius:3px;"></div>
<svg style="left:516px;top:905px;" width="16" height="16" viewBox="0 0 16 16"><path d="M12.5 6 A5 5 0 1 1 10 3.8" fill="none" stroke="#d8d8d8" stroke-width="1.3"/><path d="M5.5 8 L8 10.5 L13 4.5" fill="none" stroke="#d8d8d8" stroke-width="1.5"/></svg>
<div style="left:573px;top:905px;width:16px;height:16px;background:#c9ec7e;border-radius:2px;"></div>
<svg style="left:593px;top:908px;" width="15" height="10" viewBox="0 0 15 10"><path d="M4 1 H14 V9 H4 L0.5 5 Z" fill="#d0d0d0"/><circle cx="5" cy="5" r="1.6" fill="#383838"/></svg>
<div style="left:629px;top:904px;width:15px;height:18px;background:#323232;border-radius:3px;"></div>
<svg style="left:629px;top:904px;" width="15" height="18" viewBox="0 0 15 18"><path d="M3.5 7 L7.5 11 L11.5 7" fill="none" stroke="#9a9a9a" stroke-width="1"/></svg>
<div style="left:645px;top:904px;width:15px;height:18px;background:#2e2e2e;border-radius:3px;"></div>
<svg style="left:645px;top:904px;" width="15" height="18" viewBox="0 0 15 18"><circle cx="7.5" cy="9" r="3.2" fill="#d8d8d8"/></svg>
<svg style="left:666px;top:905px;" width="16" height="16" viewBox="0 0 16 16"><rect x="1" y="1" width="2" height="2" fill="#4f9f4f"/><rect x="1" y="3" width="2" height="2" fill="#c8f0a0"/><rect x="1" y="5" width="2" height="2" fill="#6cc06c"/><rect x="1" y="7" width="2" height="2" fill="#9be08a"/><rect x="1" y="9" width="2" height="2" fill="#9be08a"/><rect x="1" y="11" width="2" height="2" fill="#4f9f4f"/><rect x="1" y="13" width="2" height="2" fill="#c8f0a0"/><rect x="3" y="1" width="2" height="2" fill="#9be08a"/><rect x="3" y="3" width="2" height="2" fill="#4f9f4f"/><rect x="3" y="5" width="2" height="2" fill="#c8f0a0"/><rect x="3" y="7" width="2" height="2" fill="#6cc06c"/><rect x="3" y="9" width="2" height="2" fill="#9be08a"/><rect x="3" y="11" width="2" height="2" fill="#4f9f4f"/><rect x="3" y="13" width="2" height="2" fill="#6cc06c"/><rect x="5" y="1" width="2" height="2" fill="#6cc06c"/><rect x="5" y="3" width="2" height="2" fill="#9be08a"/><rect x="5" y="5" width="2" height="2" fill="#4f9f4f"/><rect x="5" y="7" width="2" height="2" fill="#6cc06c"/><rect x="5" y="9" width="2" height="2" fill="#9be08a"/><rect x="5" y="11" width="2" height="2" fill="#c8f0a0"/><rect x="5" y="13" width="2" height="2" fill="#6cc06c"/><rect x="7" y="1" width="2" height="2" fill="#4f9f4f"/><rect x="7" y="3" width="2" height="2" fill="#6cc06c"/><rect x="7" y="5" width="2" height="2" fill="#4f9f4f"/><rect x="7" y="7" width="2" height="2" fill="#6cc06c"/><rect x="7" y="9" width="2" height="2" fill="#9be08a"/><rect x="7" y="11" width="2" height="2" fill="#c8f0a0"/><rect x="7" y="13" width="2" height="2" fill="#9be08a"/><rect x="9" y="1" width="2" height="2" fill="#9be08a"/><rect x="9" y="3" width="2" height="2" fill="#c8f0a0"/><rect x="9" y="5" width="2" height="2" fill="#9be08a"/><rect x="9" y="7" width="2" height="2" fill="#c8f0a0"/><rect x="9" y="9" width="2" height="2" fill="#9be08a"/><rect x="9" y="11" width="2" height="2" fill="#6cc06c"/><rect x="9" y="13" width="2" height="2" fill="#4f9f4f"/><rect x="11" y="1" width="2" height="2" fill="#c8f0a0"/><rect x="11" y="3" width="2" height="2" fill="#4f9f4f"/><rect x="11" y="5" width="2" height="2" fill="#6cc06c"/><rect x="11" y="7" width="2" height="2" fill="#c8f0a0"/><rect x="11" y="9" width="2" height="2" fill="#9be08a"/><rect x="11" y="11" width="2" height="2" fill="#6cc06c"/><rect x="11" y="13" width="2" height="2" fill="#4f9f4f"/><rect x="13" y="1" width="2" height="2" fill="#4f9f4f"/><rect x="13" y="3" width="2" height="2" fill="#9be08a"/><rect x="13" y="5" width="2" height="2" fill="#6cc06c"/><rect x="13" y="7" width="2" height="2" fill="#4f9f4f"/><rect x="13" y="9" width="2" height="2" fill="#9be08a"/><rect x="13" y="11" width="2" height="2" fill="#6cc06c"/><rect x="13" y="13" width="2" height="2" fill="#c8f0a0"/></svg>
<div class="t" id="t115" style="left:686px;top:904.5px;height:18px;line-height:18px;font-size:13px;color:#e6e6e6;font-family:'Liberation Sans',sans-serif;white-space:nowrap;transform:scaleX(0.9127);transform-origin:0 50%;">TransitionNoise</div>
<div style="left:965.5px;top:905px;width:20.5px;height:16px;background:#2c2c2c;border-radius:3px;"></div>
<div style="left:975.5px;top:905px;width:0.8px;height:16px;background:#262626;"></div>
<svg style="left:965px;top:904px;" width="22" height="18" viewBox="0 0 22 18"><path d="M2.5 9 L4.5 6 L8 6 L8 12 L4.5 12 Z" fill="#777"/><path d="M13 6 L16.5 6 L18.5 9 L16.5 12 L13 12 Z" fill="#c864dc"/></svg>
<svg style="left:990px;top:907px;" width="12" height="12" viewBox="0 0 12 12"><circle cx="6" cy="6" r="4.4" fill="none" stroke="#707070" stroke-width="1.3"/></svg>
<svg style="left:652px;top:924px;" width="2" height="11" viewBox="0 0 2 11"><path d="M1 0 V11" stroke="#c8c8c8" stroke-width="1" stroke-dasharray="1 1"/></svg>
<svg style="left:653px;top:934px;" width="9" height="2" viewBox="0 0 9 2"><path d="M0 1 H9" stroke="#c8c8c8" stroke-width="1" stroke-dasharray="1 1"/></svg>
<div class="t" id="t116" style="left:666px;top:926.5px;height:18px;line-height:18px;font-size:13px;color:#e6e6e6;font-family:'Liberation Sans',sans-serif;white-space:nowrap;transform:scaleX(0.9358);transform-origin:0 50%;">Strength</div>
<div style="left:907px;top:927px;width:84px;height:16px;background:#2b2b2b;border-radius:2px 0 0 2px;"></div>
<div style="left:991px;top:927px;width:10px;height:16px;background:#303030;border-radius:0 2px 2px 0;"></div>
<div class="t" id="t117" style="left:911px;top:927.5px;height:16px;line-height:16px;font-size:12px;color:#6a6a6a;font-family:'Liberation Sans',sans-serif;white-space:nowrap;transform:scaleX(0.7496);transform-origin:0 50%;">%</div>
<div class="t" id="t118" style="left:924px;top:926.5px;height:18px;line-height:18px;font-size:13px;color:#e6e6e6;font-family:'Liberation Sans',sans-serif;white-space:nowrap;transform:scaleX(0.9404);transform-origin:0 50%;">0.0</div>
<svg style="left:978px;top:930px;" width="10" height="10" viewBox="0 0 10 10"><path d="M5 1 L9 5 L5 9 L1 5 Z" fill="#d0d0d0"/></svg>
<svg style="left:993px;top:930px;" width="8" height="10" viewBox="0 0 8 10"><path d="M1 1 L7 5 L1 9 Z" fill="#777"/></svg>
<div style="left:496px;top:948px;width:17.5px;height:18px;background:#2c2c2c;border-radius:3px;"></div>
<div style="left:515px;top:948px;width:17.5px;height:18px;background:#2c2c2c;border-radius:3px;"></div>
<svg style="left:516px;top:949px;" width="16" height="16" viewBox="0 0 16 16"><path d="M12.5 6 A5 5 0 1 1 10 3.8" fill="none" stroke="#d8d8d8" stroke-width="1.3"/><path d="M5.5 8 L8 10.5 L13 4.5" fill="none" stroke="#d8d8d8" stroke-width="1.5"/></svg>
<div style="left:573px;top:949px;width:16px;height:16px;background:#c9ec7e;border-radius:2px;"></div>
<svg style="left:593px;top:952px;" width="15" height="10" viewBox="0 0 15 10"><path d="M4 1 H14 V9 H4 L0.5 5 Z" fill="#d0d0d0"/><circle cx="5" cy="5" r="1.6" fill="#383838"/></svg>
<svg style="left:664px;top:950px;" width="20" height="14" viewBox="0 0 20 14"><path d="M1 8 L4 3 L7 11 L10 3 L13 11 L16 3 L19 8" fill="none" stroke="#8fd86f" stroke-width="1.3"/></svg>
<div class="t" id="t119" style="left:686px;top:948.5px;height:18px;line-height:18px;font-size:13px;color:#e6e6e6;font-family:'Liberation Sans',sans-serif;white-space:nowrap;transform:scaleX(0.9138);transform-origin:0 50%;">ScaleShiftOscillator</div>
<div style="left:965.5px;top:949px;width:20.5px;height:16px;background:#2c2c2c;border-radius:3px;"></div>
<div style="left:975.5px;top:949px;width:0.8px;height:16px;background:#262626;"></div>
<svg style="left:965px;top:948px;" width="22" height="18" viewBox="0 0 22 18"><path d="M2.5 9 L4.5 6 L8 6 L8 12 L4.5 12 Z" fill="#777"/><path d="M13 6 L16.5 6 L18.5 9 L16.5 12 L13 12 Z" fill="#c864dc"/></svg>
<svg style="left:990px;top:951px;" width="12" height="12" viewBox="0 0 12 12"><circle cx="6" cy="6" r="4.4" fill="none" stroke="#707070" stroke-width="1.3"/></svg>
<div style="left:494px;top:963px;width:525px;height:12px;background:#383838;"></div>
<div style="left:1005px;top:963px;width:14px;height:12px;background:#2a2a2a;"></div>
<div style="left:496px;top:965px;width:508px;height:9px;background:#4a4a4a;border-radius:5px;"></div>
<div style="left:494px;top:670px;width:525px;height:42px;background:#444444;"></div>
<div style="left:496px;top:672px;width:314px;height:19px;background:#2a2a2a;border-radius:10px;"></div>
<svg style="left:500px;top:674px;" width="16" height="16" viewBox="0 0 16 16"><circle cx="6.3" cy="6.8" r="4.9" fill="none" stroke="#e6e6e6" stroke-width="1.1"/><path d="M10.2 10.7 L12.6 13.1" stroke="#e6e6e6" stroke-width="2" stroke-linecap="round"/></svg>
<div class="t" id="t120" style="left:520px;top:673.5px;height:18px;line-height:18px;font-size:13px;color:#8a8a8a;font-family:'Liberation Sans',sans-serif;white-space:nowrap;transform:scaleX(0.8831);transform-origin:0 50%;">Enter a layer name</div>
<div style="left:813px;top:672px;width:19px;height:19px;background:#2d2d2d;border-radius:3px;box-shadow:inset 0 0 0 1px #242424;"></div>
<svg style="left:813px;top:672px;" width="19" height="19" viewBox="0 0 19 19"><path d="M9.5 4 V15 M4 9.5 H15" stroke="#f0f0f0" stroke-width="2"/><path d="M17 14 V17 H14 Z" fill="#5ec4a0"/></svg>
<div style="left:857px;top:672px;width:19px;height:19px;background:#2d2d2d;border-radius:3px;box-shadow:inset 0 0 0 1px #242424;"></div>
<svg style="left:857px;top:672px;" width="19" height="19" viewBox="0 0 19 19"><circle cx="7" cy="13" r="4" fill="#666"/><circle cx="9" cy="11" r="4" fill="#888"/><circle cx="12" cy="8" r="4.5" fill="#d8d8d8"/></svg>
<div style="left:879px;top:672px;width:19px;height:19px;background:#2d2d2d;border-radius:3px;box-shadow:inset 0 0 0 1px #242424;"></div>
<svg style="left:879px;top:672px;" width="19" height="19" viewBox="0 0 19 19"><g fill="#ddd"><circle cx="5" cy="5" r="1"/><circle cx="12" cy="5" r="1"/><circle cx="5" cy="11" r="1"/><path d="M12 8 L13 11 L16 12 L13 13 L12 16 L11 13 L8 12 L11 11 Z"/></g><path d="M17 14 V17 H14 Z" fill="#5ec4a0"/></svg>
<div style="left:901px;top:672px;width:19px;height:19px;background:#2d2d2d;border-radius:3px;box-shadow:inset 0 0 0 1px #242424;"></div>
<svg style="left:901px;top:672px;" width="19" height="19" viewBox="0 0 19 19"><path d="M3 5 H16 M3 9.5 H16 M3 14 H16" stroke="#ddd" stroke-width="1"/><circle cx="8" cy="5" r="1.8" fill="#2d2d2d" stroke="#ddd"/><circle cx="12" cy="9.5" r="1.8" fill="#2d2d2d" stroke="#ddd"/><circle cx="8" cy="14" r="1.8" fill="#2d2d2d" stroke="#ddd"/><path d="M17 14 V17 H14 Z" fill="#5ec4a0"/></svg>
<div style="left:923px;top:672px;width:94px;height:19px;background:#2b2b2b;border-radius:2px;"></div>
<div class="t" id="t121" style="left:928px;top:674.5px;height:16px;line-height:16px;font-size:12px;color:#555;font-family:'Liberation Sans',sans-serif;white-space:nowrap;transform:scaleX(0.9532);transform-origin:0 50%;">F</div>
<div class="t" id="t122" style="left:940px;top:673.5px;height:18px;line-height:18px;font-size:13px;color:#e6e6e6;font-family:'Liberation Sans',sans-serif;white-space:nowrap;transform:scaleX(1.0137);transform-origin:0 50%;">216</div>
<svg style="left:499px;top:695px;" width="11" height="14" viewBox="0 0 11 14"><path d="M3 6 V4 A2.5 2.5 0 0 1 8 4 V6" fill="none" stroke="#cfcfcf" stroke-width="1.4"/><rect x="1.5" y="6" width="8" height="7" fill="#cfcfcf"/><rect x="5" y="9" width="1.2" height="2" fill="#444"/></svg>
<svg style="left:516px;top:697px;" width="15" height="11" viewBox="0 0 15 11"><ellipse cx="7.5" cy="5.5" rx="6" ry="3.8" fill="none" stroke="#cfcfcf" stroke-width="1.2"/><circle cx="7.5" cy="5.5" r="2" fill="#cfcfcf"/></svg>
<svg style="left:536px;top:695px;" width="13" height="14" viewBox="0 0 13 14"><path d="M6.5 1.5 L11.5 4 V10 L6.5 12.5 L1.5 10 V4 Z M1.5 4 L6.5 6.5 L11.5 4 M6.5 6.5 V12.5" fill="none" stroke="#cfcfcf" stroke-width="1.1"/></svg>
<svg style="left:555px;top:696px;" width="13" height="12" viewBox="0 0 13 12"><path d="M1 4 H3.5 L7 1 V11 L3.5 8 H1 Z" fill="#cfcfcf"/><path d="M9 3.5 Q10.5 6 9 8.5 M10.5 2 Q13 6 10.5 10" fill="none" stroke="#cfcfcf" stroke-width="1"/></svg>
<svg style="left:575px;top:695px;" width="12" height="14" viewBox="0 0 12 14"><path d="M1.5 12.5 L8 6 M7 4 L10 7" stroke="#cfcfcf" stroke-width="1.2"/><path d="M8 3 L10 1 L12 3 L10 5 Z" fill="#cfcfcf"/></svg>
<svg style="left:593px;top:697px;" width="15" height="10" viewBox="0 0 15 10"><path d="M4 1 H14 V9 H4 L0.5 5 Z" fill="#cfcfcf"/><circle cx="5" cy="5" r="1.6" fill="#444"/></svg>
<div class="t" id="t123" style="left:649px;top:695.0px;height:18px;line-height:18px;font-size:13px;color:#e6e6e6;font-family:'Liberation Sans',sans-serif;white-space:nowrap;transform:scaleX(0.8937);transform-origin:0 50%;">Name</div>
<div style="left:494px;top:975px;width:525px;height:23px;background:#444444;"></div>
<div style="left:498px;top:978px;width:18px;height:18px;background:#2d2d2d;border-radius:3px;box-shadow:inset 0 0 0 1px #242424;"></div>
<svg style="left:500px;top:982px;" width="15" height="10" viewBox="0 0 15 10"><path d="M4 1 H14 V9 H4 L0.5 5 Z" fill="#d0d0d0"/><circle cx="5" cy="5" r="1.6" fill="#2d2d2d"/></svg>
<div class="t" id="t124" style="left:521px;top:978.5px;height:18px;line-height:18px;font-size:13px;color:#e6e6e6;font-family:'Liberation Sans',sans-serif;white-space:nowrap;transform:scaleX(0.8774);transform-origin:0 50%;">1 selected</div>
<div style="left:810px;top:978px;width:19px;height:18px;background:#2d2d2d;border-radius:3px;box-shadow:inset 0 0 0 1px #242424;"></div>
<svg style="left:810px;top:978px;" width="19" height="18" viewBox="0 0 19 18"><rect x="4.5" y="4" width="10" height="10" fill="none" stroke="#ddd" stroke-width="1.2"/><rect x="8" y="7.5" width="3" height="3" fill="#ddd"/></svg>
<div style="left:833px;top:977px;width:183px;height:20px;background:#575757;border-radius:3px;"></div>
<div style="left:834px;top:978px;width:86px;height:18px;background:#262626;border-radius:3px;"></div>
<svg style="left:840px;top:980px;" width="14" height="14" viewBox="0 0 14 14"><path d="M1 3 H11 M3 7 H13 M1 11 H11" stroke="#3ec46d" stroke-width="1.8"/></svg>
<div class="t" id="t125" style="left:858px;top:978.5px;height:18px;line-height:18px;font-size:13px;color:#e6e6e6;font-family:'Liberation Sans',sans-serif;white-space:nowrap;transform:scaleX(0.8942);transform-origin:0 50%;">Time Editor</div>
<svg style="left:927px;top:980px;" width="14" height="14" viewBox="0 0 14 14"><path d="M1.5 1 V12.5 H13" fill="none" stroke="#ccc" stroke-width="1"/><path d="M2 12 L11 4" stroke="#ccc" stroke-width="1"/></svg>
<div class="t" id="t126" style="left:945px;top:978.5px;height:18px;line-height:18px;font-size:13px;color:#e6e6e6;font-family:'Liberation Sans',sans-serif;white-space:nowrap;transform:scaleX(0.9226);transform-origin:0 50%;">Graph Editor</div>
<div style="left:1019px;top:670px;width:4px;height:42px;background:#1e1e1e;"></div>
<div style="left:1019px;top:962px;width:7px;height:36px;background:#1e1e1e;"></div>
<div style="left:1023px;top:670px;width:890px;height:305px;background:#262626;"></div>
<div style="left:1023px;top:670px;width:3px;height:305px;background:#1e1e1e;"></div>
<div style="left:1026px;top:694px;width:8px;height:269px;background:#1c1c1c;"></div>
<svg style="left:1023px;top:670px;" width="890" height="24" viewBox="0 0 890 24"><rect x="10.2" y="16" width="1.2" height="8" fill="#8a8a8a"/><rect x="20.7" y="20" width="1" height="4" fill="#8a8a8a"/><rect x="31.2" y="20" width="1" height="4" fill="#8a8a8a"/><rect x="41.6" y="20" width="1" height="4" fill="#8a8a8a"/><rect x="52.1" y="20" width="1" height="4" fill="#8a8a8a"/><rect x="62.4" y="16" width="1.2" height="8" fill="#8a8a8a"/><rect x="73.0" y="20" width="1" height="4" fill="#8a8a8a"/><rect x="83.4" y="20" width="1" height="4" fill="#8a8a8a"/><rect x="93.9" y="20" width="1" height="4" fill="#8a8a8a"/><rect x="104.3" y="20" width="1" height="4" fill="#8a8a8a"/><rect x="114.7" y="16" width="1.2" height="8" fill="#8a8a8a"/><rect x="125.2" y="20" width="1" height="4" fill="#8a8a8a"/><rect x="135.7" y="20" width="1" height="4" fill="#8a8a8a"/><rect x="146.1" y="20" width="1" height="4" fill="#8a8a8a"/><rect x="156.6" y="20" width="1" height="4" fill="#8a8a8a"/><rect x="166.9" y="16" width="1.2" height="8" fill="#8a8a8a"/><rect x="177.5" y="20" width="1" height="4" fill="#8a8a8a"/><rect x="188.0" y="20" width="1" height="4" fill="#8a8a8a"/><rect x="198.4" y="20" width="1" height="4" fill="#8a8a8a"/><rect x="208.9" y="20" width="1" height="4" fill="#8a8a8a"/><rect x="219.2" y="16" width="1.2" height="8" fill="#8a8a8a"/><rect x="229.8" y="20" width="1" height="4" fill="#8a8a8a"/><rect x="240.2" y="20" width="1" height="4" fill="#8a8a8a"/><rect x="250.7" y="20" width="1" height="4" fill="#8a8a8a"/><rect x="261.1" y="20" width="1" height="4" fill="#8a8a8a"/><rect x="271.5" y="16" width="1.2" height="8" fill="#8a8a8a"/><rect x="282.0" y="20" width="1" height="4" fill="#8a8a8a"/><rect x="292.5" y="20" width="1" height="4" fill="#8a8a8a"/><rect x="302.9" y="20" width="1" height="4" fill="#8a8a8a"/><rect x="313.4" y="20" width="1" height="4" fill="#8a8a8a"/><rect x="323.7" y="16" width="1.2" height="8" fill="#8a8a8a"/><rect x="334.3" y="20" width="1" height="4" fill="#8a8a8a"/><rect x="344.8" y="20" width="1" height="4" fill="#8a8a8a"/><rect x="355.2" y="20" width="1" height="4" fill="#8a8a8a"/><rect x="365.7" y="20" width="1" height="4" fill="#8a8a8a"/><rect x="376.0" y="16" width="1.2" height="8" fill="#8a8a8a"/><rect x="386.6" y="20" width="1" height="4" fill="#8a8a8a"/><rect x="397.0" y="20" width="1" height="4" fill="#8a8a8a"/><rect x="407.5" y="20" width="1" height="4" fill="#8a8a8a"/><rect x="417.9" y="20" width="1" height="4" fill="#8a8a8a"/><rect x="428.3" y="16" width="1.2" height="8" fill="#8a8a8a"/><rect x="438.8" y="20" width="1" height="4" fill="#8a8a8a"/><rect x="449.3" y="20" width="1" height="4" fill="#8a8a8a"/><rect x="459.7" y="20" width="1" height="4" fill="#8a8a8a"/><rect x="470.2" y="20" width="1" height="4" fill="#8a8a8a"/><rect x="480.5" y="16" width="1.2" height="8" fill="#8a8a8a"/><rect x="491.1" y="20" width="1" height="4" fill="#8a8a8a"/><rect x="501.6" y="20" width="1" height="4" fill="#8a8a8a"/><rect x="512.0" y="20" width="1" height="4" fill="#8a8a8a"/><rect x="522.5" y="20" width="1" height="4" fill="#8a8a8a"/><rect x="532.8" y="16" width="1.2" height="8" fill="#8a8a8a"/><rect x="543.4" y="20" width="1" height="4" fill="#8a8a8a"/><rect x="553.8" y="20" width="1" height="4" fill="#8a8a8a"/><rect x="564.3" y="20" width="1" height="4" fill="#8a8a8a"/><rect x="574.7" y="20" width="1" height="4" fill="#8a8a8a"/><rect x="585.1" y="16" width="1.2" height="8" fill="#8a8a8a"/><rect x="595.6" y="20" width="1" height="4" fill="#8a8a8a"/><rect x="606.1" y="20" width="1" height="4" fill="#8a8a8a"/><rect x="616.5" y="20" width="1" height="4" fill="#8a8a8a"/><rect x="627.0" y="20" width="1" height="4" fill="#8a8a8a"/><rect x="637.3" y="16" width="1.2" height="8" fill="#8a8a8a"/><rect x="647.9" y="20" width="1" height="4" fill="#8a8a8a"/><rect x="658.3" y="20" width="1" height="4" fill="#8a8a8a"/><rect x="668.8" y="20" width="1" height="4" fill="#8a8a8a"/><rect x="679.3" y="20" width="1" height="4" fill="#8a8a8a"/><rect x="689.6" y="16" width="1.2" height="8" fill="#8a8a8a"/><rect x="700.2" y="20" width="1" height="4" fill="#8a8a8a"/><rect x="710.6" y="20" width="1" height="4" fill="#8a8a8a"/><rect x="721.1" y="20" width="1" height="4" fill="#8a8a8a"/><rect x="731.5" y="20" width="1" height="4" fill="#8a8a8a"/><rect x="741.9" y="16" width="1.2" height="8" fill="#8a8a8a"/><rect x="752.4" y="20" width="1" height="4" fill="#8a8a8a"/><rect x="762.9" y="20" width="1" height="4" fill="#8a8a8a"/><rect x="773.3" y="20" width="1" height="4" fill="#8a8a8a"/><rect x="783.8" y="20" width="1" height="4" fill="#8a8a8a"/><rect x="794.1" y="16" width="1.2" height="8" fill="#8a8a8a"/><rect x="804.7" y="20" width="1" height="4" fill="#8a8a8a"/><rect x="815.1" y="20" width="1" height="4" fill="#8a8a8a"/><rect x="825.6" y="20" width="1" height="4" fill="#8a8a8a"/><rect x="836.1" y="20" width="1" height="4" fill="#8a8a8a"/><rect x="846.4" y="16" width="1.2" height="8" fill="#8a8a8a"/><rect x="857.0" y="20" width="1" height="4" fill="#8a8a8a"/><rect x="867.4" y="20" width="1" height="4" fill="#8a8a8a"/><rect x="877.9" y="20" width="1" height="4" fill="#8a8a8a"/></svg>
<div style="left:1003.8px;top:671px;width:60px;height:16px;line-height:16px;text-align:center;font-size:12px;color:#d8d8d8;font-family:'Liberation Sans',sans-serif;transform:scaleX(0.95);">0</div>
<div style="left:1056.0px;top:671px;width:60px;height:16px;line-height:16px;text-align:center;font-size:12px;color:#d8d8d8;font-family:'Liberation Sans',sans-serif;transform:scaleX(0.95);">15</div>
<div style="left:1108.3px;top:671px;width:60px;height:16px;line-height:16px;text-align:center;font-size:12px;color:#d8d8d8;font-family:'Liberation Sans',sans-serif;transform:scaleX(0.95);">30</div>
<div style="left:1160.5px;top:671px;width:60px;height:16px;line-height:16px;text-align:center;font-size:12px;color:#d8d8d8;font-family:'Liberation Sans',sans-serif;transform:scaleX(0.95);">45</div>
<div style="left:1212.8px;top:671px;width:60px;height:16px;line-height:16px;text-align:center;font-size:12px;color:#d8d8d8;font-family:'Liberation Sans',sans-serif;transform:scaleX(0.95);">60</div>
<div style="left:1265.1px;top:671px;width:60px;height:16px;line-height:16px;text-align:center;font-size:12px;color:#d8d8d8;font-family:'Liberation Sans',sans-serif;transform:scaleX(0.95);">75</div>
<div style="left:1317.3px;top:671px;width:60px;height:16px;line-height:16px;text-align:center;font-size:12px;color:#d8d8d8;font-family:'Liberation Sans',sans-serif;transform:scaleX(0.95);">90</div>
<div style="left:1369.6px;top:671px;width:60px;height:16px;line-height:16px;text-align:center;font-size:12px;color:#d8d8d8;font-family:'Liberation Sans',sans-serif;transform:scaleX(0.95);">105</div>
<div style="left:1421.9px;top:671px;width:60px;height:16px;line-height:16px;text-align:center;font-size:12px;color:#d8d8d8;font-family:'Liberation Sans',sans-serif;transform:scaleX(0.95);">120</div>
<div style="left:1474.1px;top:671px;width:60px;height:16px;line-height:16px;text-align:center;font-size:12px;color:#d8d8d8;font-family:'Liberation Sans',sans-serif;transform:scaleX(0.95);">135</div>
<div style="left:1526.4px;top:671px;width:60px;height:16px;line-height:16px;text-align:center;font-size:12px;color:#d8d8d8;font-family:'Liberation Sans',sans-serif;transform:scaleX(0.95);">150</div>
<div style="left:1578.7px;top:671px;width:60px;height:16px;line-height:16px;text-align:center;font-size:12px;color:#d8d8d8;font-family:'Liberation Sans',sans-serif;transform:scaleX(0.95);">165</div>
<div style="left:1630.9px;top:671px;width:60px;height:16px;line-height:16px;text-align:center;font-size:12px;color:#d8d8d8;font-family:'Liberation Sans',sans-serif;transform:scaleX(0.95);">180</div>
<div style="left:1683.2px;top:671px;width:60px;height:16px;line-height:16px;text-align:center;font-size:12px;color:#d8d8d8;font-family:'Liberation Sans',sans-serif;transform:scaleX(0.95);">195</div>
<div style="left:1735.5px;top:671px;width:60px;height:16px;line-height:16px;text-align:center;font-size:12px;color:#d8d8d8;font-family:'Liberation Sans',sans-serif;transform:scaleX(0.95);">210</div>
<div style="left:1787.7px;top:671px;width:60px;height:16px;line-height:16px;text-align:center;font-size:12px;color:#d8d8d8;font-family:'Liberation Sans',sans-serif;transform:scaleX(0.95);">225</div>
<div style="left:1840.0px;top:671px;width:60px;height:16px;line-height:16px;text-align:center;font-size:12px;color:#d8d8d8;font-family:'Liberation Sans',sans-serif;transform:scaleX(0.95);">240</div>
<div style="left:1034px;top:694px;width:871px;height:16px;background:#464646;"></div>
<div style="left:1029px;top:693px;width:5px;height:18px;background:#6cc9ad;border-radius:1px;"></div>
<div style="left:1905px;top:693px;width:5px;height:18px;background:#6cc9ad;border-radius:1px;"></div>
<div style="left:1905px;top:711px;width:8px;height:252px;background:#1c1c1c;"></div>
<svg style="left:1023px;top:711px;" width="890" height="252" viewBox="0 0 890 252"><rect x="136.0" y="2.4" width="70.5" height="2" fill="#c8ef78"/><path d="M133.0 -1.1 L137.5 3.4 L133.0 7.9 L128.5 3.4 Z" fill="#c9c9c9"/><path d="M209.5 -1.1 L214.0 3.4 L209.5 7.9 L205.0 3.4 Z" fill="#c9c9c9"/></svg>
<div style="left:1034px;top:728px;width:871px;height:18px;background:#fde47a;border-radius:3px;"></div>
<div class="t" id="t127" style="left:1042px;top:728.5px;height:18px;line-height:18px;font-size:13px;color:#1e1e1e;font-family:'Liberation Sans',sans-serif;white-space:nowrap;transform:scaleX(0.9507);transform-origin:0 50%;">GridDuplicator</div>
<svg style="left:1023px;top:711px;" width="890" height="252" viewBox="0 0 890 252"><rect x="55.6" y="46.0" width="203.1" height="2" fill="#fde47a"/><path d="M52.6 42.5 L57.1 47.0 L52.6 51.5 L48.1 47.0 Z" fill="#c9c9c9"/><path d="M261.7 42.5 L266.2 47.0 L261.7 51.5 L257.2 47.0 Z" fill="#c9c9c9"/></svg>
<svg style="left:1023px;top:711px;" width="890" height="252" viewBox="0 0 890 252"><rect x="55.6" y="67.7" width="203.1" height="2" fill="#fde47a"/><path d="M52.6 64.2 L57.1 68.7 L52.6 73.2 L48.1 68.7 Z" fill="#c9c9c9"/><path d="M261.7 64.2 L266.2 68.7 L261.7 73.2 L257.2 68.7 Z" fill="#c9c9c9"/></svg>
<div style="left:1034px;top:794px;width:871px;height:18px;background:#fde47a;border-radius:3px;"></div>
<div class="t" id="t128" style="left:1042px;top:794.5px;height:18px;line-height:18px;font-size:13px;color:#1e1e1e;font-family:'Liberation Sans',sans-serif;white-space:nowrap;transform:scaleX(0.8969);transform-origin:0 50%;">inputShape</div>
<div style="left:1034px;top:816px;width:871px;height:18px;background:radial-gradient(circle,#8fba58 0.6px,rgba(143,186,88,0) 1.2px) 0 0/3px 3px,#e2f59a;box-shadow:inset 0 0 0 1px #ffffff;"></div>
<div class="t" id="t129" style="left:1043px;top:816.5px;height:18px;line-height:18px;font-size:13px;color:#505a3a;font-family:'Liberation Sans',sans-serif;white-space:nowrap;transform:scaleX(0.9173);transform-origin:0 50%;">1to2 &amp; 4to1</div>
<svg style="left:1023px;top:711px;" width="890" height="252" viewBox="0 0 890 252"><rect x="55.6" y="134.0" width="77.8" height="2" fill="#c8ef78"/><path d="M52.6 130.5 L57.1 135.0 L52.6 139.5 L48.1 135.0 Z" fill="#c9c9c9"/><path d="M136.4 130.5 L140.9 135.0 L136.4 139.5 L131.9 135.0 Z" fill="#c9c9c9"/></svg>
<div style="left:1034px;top:860px;width:871px;height:18px;background:#c4c4c4;border-radius:3px;"></div>
<div class="t" id="t130" style="left:1043px;top:860.5px;height:18px;line-height:18px;font-size:13px;color:#1e1e1e;font-family:'Liberation Sans',sans-serif;white-space:nowrap;transform:scaleX(0.8294);transform-origin:0 50%;">1</div>
<div style="left:1034px;top:882px;width:871px;height:18px;background:repeating-linear-gradient(135deg,#8ef5b5 0px,#7ae8a0 1.4px,#72df97 6px,#6edb93 12.7px,#88efae 12.73px,#6dd593 14.1px,#68cf8c 19px,#63c886 25.46px);border-radius:3px;"></div>
<div class="t" id="t131" style="left:1042px;top:882.5px;height:18px;line-height:18px;font-size:13px;color:#1e1e1e;font-family:'Liberation Sans',sans-serif;white-space:nowrap;transform:scaleX(0.9534);transform-origin:0 50%;">Color Array</div>
<div style="left:1034px;top:904px;width:871px;height:18px;background:repeating-linear-gradient(135deg,#f2ff9c 0px,#dcf786 1.4px,#cdef7d 6px,#c9ec7a 12.7px,#e8fa94 12.73px,#c4e474 14.1px,#bddc6f 19px,#b5d46a 25.46px);border-radius:3px;"></div>
<div class="t" id="t132" style="left:1042px;top:904.5px;height:18px;line-height:18px;font-size:13px;color:#1e1e1e;font-family:'Liberation Sans',sans-serif;white-space:nowrap;transform:scaleX(0.9350);transform-origin:0 50%;">TransitionNoise</div>
<svg style="left:1023px;top:711px;" width="890" height="252" viewBox="0 0 890 252"><rect x="55.6" y="222.0" width="77.8" height="2" fill="#c8ef78"/><rect x="139.4" y="222.0" width="36.0" height="2" fill="#c8ef78"/><rect x="181.4" y="222.0" width="7.9" height="2" fill="#c8ef78"/><path d="M52.6 218.5 L57.1 223.0 L52.6 227.5 L48.1 223.0 Z" fill="#c9c9c9"/><path d="M136.4 218.5 L140.9 223.0 L136.4 227.5 L131.9 223.0 Z" fill="#c9c9c9"/><path d="M178.4 218.5 L182.9 223.0 L178.4 227.5 L173.9 223.0 Z" fill="#c9c9c9"/><path d="M192.3 218.5 L196.8 223.0 L192.3 227.5 L187.8 223.0 Z" fill="#c9c9c9"/></svg>
<div style="left:1034px;top:948px;width:871px;height:15px;background:repeating-linear-gradient(135deg,#f2ff9c 0px,#dcf786 1.4px,#cdef7d 6px,#c9ec7a 12.7px,#e8fa94 12.73px,#c4e474 14.1px,#bddc6f 19px,#b5d46a 25.46px);border-radius:3px 3px 0 0;"></div>
<div class="t" id="t133" style="left:1042px;top:948.5px;height:18px;line-height:18px;font-size:13px;color:#1e1e1e;font-family:'Liberation Sans',sans-serif;white-space:nowrap;transform:scaleX(0.9138);transform-origin:0 50%;">ScaleShiftOscillator</div>
<div style="left:1785.6px;top:694px;width:1.3px;height:269px;background:#6cc9ad;"></div>
<svg style="left:1779px;top:683px;" width="15" height="10" viewBox="0 0 15 10"><path d="M0 0.5 H15 L7.5 9.5 Z" fill="#6cc9ad"/></svg>
<div style="left:1026px;top:963px;width:888px;height:12px;background:#262626;"></div>
<div style="left:1027px;top:965px;width:886px;height:9px;background:#4a4a4a;border-radius:5px;"></div>
<div style="left:1026px;top:975px;width:888px;height:23px;background:#444444;"></div>
<div style="left:1029px;top:978px;width:17px;height:17px;background:#2d2d2d;border-radius:3px;box-shadow:inset 0 0 0 1px #242424;"></div>
<svg style="left:1029px;top:978px;" width="17" height="17" viewBox="0 0 17 17"><path d="M3 4 H14 M3 8.5 H7 M9 8.5 H14 M3 13 H5 M8 13 H11" stroke="#ddd" stroke-width="1.5"/><path d="M15 12 V15 H12 Z" fill="#5ec4a0"/></svg>
<div style="left:1050px;top:978px;width:150px;height:18px;background:#2b2b2b;border-radius:2px;"></div>
<div class="t" id="t134" style="left:1052.5px;top:978.5px;height:18px;line-height:18px;font-size:13px;color:#e6e6e6;font-family:'Liberation Sans',sans-serif;white-space:nowrap;transform:scaleX(0.9079);transform-origin:0 50%;">Default Keyframe Layer</div>
<div style="left:1206px;top:978px;width:70px;height:18px;background:#2b2b2b;border-radius:2px;"></div>
<div class="t" id="t135" style="left:1211px;top:979.5px;height:16px;line-height:16px;font-size:12px;color:#555;font-family:'Liberation Sans',sans-serif;white-space:nowrap;transform:scaleX(0.9532);transform-origin:0 50%;">F</div>
<div class="t" id="t136" style="left:1223px;top:978.5px;height:18px;line-height:18px;font-size:13px;color:#e6e6e6;font-family:'Liberation Sans',sans-serif;white-space:nowrap;transform:scaleX(0.9209);transform-origin:0 50%;">-</div>
<div class="t" id="t137" style="left:1282px;top:978.5px;height:18px;line-height:18px;font-size:13px;color:#e6e6e6;font-family:'Liberation Sans',sans-serif;white-space:nowrap;transform:scaleX(0.9222);transform-origin:0 50%;">Align:</div>
<div style="left:1318px;top:979px;width:53px;height:17px;background:#2b2b2b;border-radius:3px;"></div>
<svg style="left:1318px;top:979px;" width="53" height="17" viewBox="0 0 53 17"><path d="M3 3 V14 M26.5 3 V14 M50 3 V14" stroke="#ddd" stroke-width="1.2"/><path d="M6 6 H9 M6 11 H14 M22 6 H31 M21 11 H32 M44 6 H47 M39 11 H47" stroke="#ddd" stroke-width="1.8"/><path d="M17.5 0 V17 M35.5 0 V17" stroke="#3a3a3a" stroke-width="1"/></svg>
<div style="left:1376px;top:978px;width:16px;height:18px;background:#2b2b2b;border-radius:3px;"></div>
<svg style="left:1376px;top:978px;" width="16" height="18" viewBox="0 0 16 18"><rect x="3" y="4" width="10" height="10" fill="none" stroke="#ddd" stroke-width="1" stroke-dasharray="2 1"/><rect x="7" y="8" width="2" height="2" fill="#ddd"/></svg>
<div style="left:1397px;top:978px;width:31px;height:18px;background:#2b2b2b;border-radius:3px;"></div>
<div style="left:1414px;top:978px;width:1px;height:18px;background:#3a3a3a;"></div>
<svg style="left:1397px;top:978px;" width="17" height="18" viewBox="0 0 17 18"><path d="M4 13 V8 A5 5 0 0 1 14 8 V10" fill="none" stroke="#ddd" stroke-width="2.2"/></svg>
<svg style="left:1417px;top:982px;" width="8" height="11" viewBox="0 0 8 11"><path d="M1.5 1.5 L6.5 5.5 L1.5 9.5 Z" fill="none" stroke="#8a8a8a" stroke-width="1"/></svg>
<div style="left:1431px;top:978px;width:32px;height:18px;background:#2b2b2b;border-radius:3px;"></div>
<div style="left:1449px;top:978px;width:1px;height:18px;background:#3a3a3a;"></div>
<svg style="left:1431px;top:978px;" width="18" height="18" viewBox="0 0 18 18"><path d="M2 9 H5 M13 9 H16 M7 5 V13 M9 3 V15 M11 6 V12" stroke="#ddd" stroke-width="1"/></svg>
<svg style="left:1452px;top:982px;" width="8" height="11" viewBox="0 0 8 11"><path d="M1.5 1.5 L6.5 5.5 L1.5 9.5 Z" fill="none" stroke="#8a8a8a" stroke-width="1"/></svg>
<svg style="left:1742px;top:979px;" width="16" height="16" viewBox="0 0 16 16"><circle cx="7" cy="7" r="5.5" fill="none" stroke="#ccc" stroke-width="1.1"/><path d="M4.5 7 H9.5" stroke="#ccc" stroke-width="1.1"/><path d="M11 11 L14 14" stroke="#ccc" stroke-width="1.5"/></svg>
<div style="left:1767px;top:985px;width:115px;height:4px;background:#3a3a3a;border-radius:2px;"></div>
<svg style="left:1760px;top:980px;" width="14" height="14" viewBox="0 0 14 14"><circle cx="7" cy="7" r="5.5" fill="#6fc2aa"/><circle cx="7" cy="7" r="2.5" fill="#8ad6c0"/></svg>
<svg style="left:1887px;top:979px;" width="16" height="16" viewBox="0 0 16 16"><circle cx="7" cy="7" r="5.5" fill="none" stroke="#ccc" stroke-width="1.1"/><path d="M4.5 7 H9.5 M7 4.5 V9.5" stroke="#ccc" stroke-width="1.1"/><path d="M11 11 L14 14" stroke="#ccc" stroke-width="1.5"/></svg>
<div style="left:1020px;top:827px;width:2px;height:1.5px;background:#777;"></div>
<div style="left:1020px;top:830px;width:2px;height:1.5px;background:#777;"></div>
<div style="left:1020px;top:833px;width:2px;height:1.5px;background:#777;"></div>
<div style="left:1020px;top:836px;width:2px;height:1.5px;background:#777;"></div>
<div style="left:1020px;top:839px;width:2px;height:1.5px;background:#777;"></div>
<div style="left:1020px;top:842px;width:2px;height:1.5px;background:#777;"></div>
<div style="left:494px;top:998px;width:1420px;height:6px;background:#121212;"></div>
<div style="left:494px;top:1004px;width:1420px;height:22px;background:#383838;"></div>
<div style="left:0px;top:1026px;width:1920px;height:3px;background:#1e1e1e;"></div>
<div style="left:498px;top:1010px;width:2px;height:2px;background:#8a8a8a;"></div>
<div style="left:498px;top:1014px;width:2px;height:2px;background:#8a8a8a;"></div>
<div style="left:498px;top:1018px;width:2px;height:2px;background:#8a8a8a;"></div>
<div style="left:506px;top:1006px;width:19px;height:19px;background:#2d2d2d;border-radius:3px;box-shadow:inset 0 0 0 1px #242424;"></div>
<svg style="left:506px;top:1006px;" width="19" height="19" viewBox="0 0 19 19"><path d="M3 3 H16 V13 H9 L6 16 V13 H3 Z" fill="#ddd"/><path d="M5.5 6 H13.5 M5.5 8.5 H13.5 M5.5 11 H11" stroke="#2d2d2d" stroke-width="1"/><path d="M17 14 V17 H14 Z" fill="#5ec4a0"/></svg>
<div style="left:527px;top:1008px;width:19px;height:14px;background:#31c46c;border-radius:2px;"></div>
<div class="t" id="t138" style="left:529.5px;top:1007.5px;height:16px;line-height:16px;font-size:12px;color:#10301c;font-family:'Liberation Sans',sans-serif;white-space:nowrap;transform:scaleX(1.0228);transform-origin:0 50%;">9+</div>
<svg style="left:553px;top:1011px;" width="8" height="8" viewBox="0 0 8 8"><circle cx="4" cy="4" r="3.5" fill="#31c46c"/></svg>
<div class="t" id="t139" style="left:565px;top:1006.5px;height:18px;line-height:18px;font-size:13px;color:#e6e6e6;font-family:'Liberation Sans',sans-serif;white-space:nowrap;transform:scaleX(0.9065);transform-origin:0 50%;">Saved scene to: D:/DATA/AI Creator/Cavalry/responsive-grid.cv.</div>
<div class="t" id="t140" style="left:1349px;top:1006.5px;height:18px;line-height:18px;font-size:13px;color:#e0e0e0;font-family:'Liberation Sans',sans-serif;white-space:nowrap;font-style:italic;transform:scaleX(0.8040);transform-origin:0 50%;">Click to see next message</div>
<div style="left:1477px;top:1006px;width:80px;height:18px;background:#d4b96c;border-radius:2px;"></div>
<div class="t" id="t141" style="left:1483px;top:1006.5px;height:18px;line-height:18px;font-size:13px;color:#1c1c1c;font-family:'Liberation Sans',sans-serif;white-space:nowrap;transform:scaleX(0.8758);transform-origin:0 50%;">Feedback</div>
<svg style="left:1538px;top:1007px;" width="16" height="16" viewBox="0 0 16 16"><rect x="3" y="2" width="9" height="12" fill="#f2f2f2"/><path d="M6 12 L13 5 L14.5 6.5 L7.5 13.5 Z" fill="#e8743a"/></svg>
<div style="left:1560px;top:1006px;width:109px;height:18px;background:#31c46c;border-radius:2px;"></div>
<div class="t" id="t142" style="left:1566px;top:1006.5px;height:18px;line-height:18px;font-size:13px;color:#1c1c1c;font-family:'Liberation Sans',sans-serif;white-space:nowrap;transform:scaleX(0.8733);transform-origin:0 50%;">Upgrade to Pro</div>
<svg style="left:1650px;top:1007px;" width="16" height="16" viewBox="0 0 16 16"><path d="M2 9 Q4 3 7 6 L8 13 H3 Z M14 9 Q12 3 9 6 L8 13 H13 Z" fill="#f5c22a"/></svg>
<div style="left:1672px;top:1006px;width:130px;height:18px;background:#b99af5;border-radius:2px;"></div>
<div class="t" id="t143" style="left:1678px;top:1006.5px;height:18px;line-height:18px;font-size:13px;color:#1c1c1c;font-family:'Liberation Sans',sans-serif;white-space:nowrap;transform:scaleX(0.9393);transform-origin:0 50%;">New Beta Available</div>
<svg style="left:1783px;top:1007px;" width="16" height="16" viewBox="0 0 16 16"><circle cx="8" cy="8.5" r="6" fill="#f6b83a"/><path d="M3 4 L8 1 L11 5 Z" fill="#5b8cf0"/><circle cx="6" cy="8" r="1" fill="#333"/><circle cx="10" cy="8" r="1" fill="#333"/></svg>
<div style="left:1805px;top:1006px;width:106px;height:18px;background:#3aabef;border-radius:2px;"></div>
<div class="t" id="t144" style="left:1811px;top:1006.5px;height:18px;line-height:18px;font-size:13px;color:#1c1c1c;font-family:'Liberation Sans',sans-serif;white-space:nowrap;transform:scaleX(0.9202);transform-origin:0 50%;">Tips and Tricks</div>
<svg style="left:1892px;top:1007px;" width="16" height="16" viewBox="0 0 16 16"><path d="M13 2 Q7 3 5 9 L7 11 Q13 9 14 3 Z" fill="#eeeeee"/><path d="M5 9 L2 10 L4 7 Z M7 11 L6 14 L9 12 Z" fill="#e84a4a"/><circle cx="10" cy="6" r="1.3" fill="#4a9ae8"/></svg>
<svg style="left:0px;top:0px;" width="1920" height="1029" viewBox="0 0 1920 1029"><path d="M282 370 L655 737" stroke="#b5e61d" stroke-width="2.7" stroke-linecap="round"/><path d="M375 436 L395.5 421 L395.5 428.5 L415 428.5 L415 442 L395.5 442 L395.5 450 Z" fill="none" stroke="#b5e61d" stroke-width="3"/><rect x="8.5" y="359.5" width="133" height="26.5" fill="none" stroke="#b5e61d" stroke-width="3"/><rect x="621.5" y="814.5" width="162.5" height="24" fill="none" stroke="#b5e61d" stroke-width="3"/></svg>
<div class="t" id="t145" style="left:314.3px;top:359.3px;height:29px;line-height:29px;font-size:21px;color:#b5e61d;font-family:'Liberation Sans',sans-serif;white-space:nowrap;font-weight:700;transform:scaleX(0.9424);transform-origin:0 50%;">drag kesini</div>
</body></html>
